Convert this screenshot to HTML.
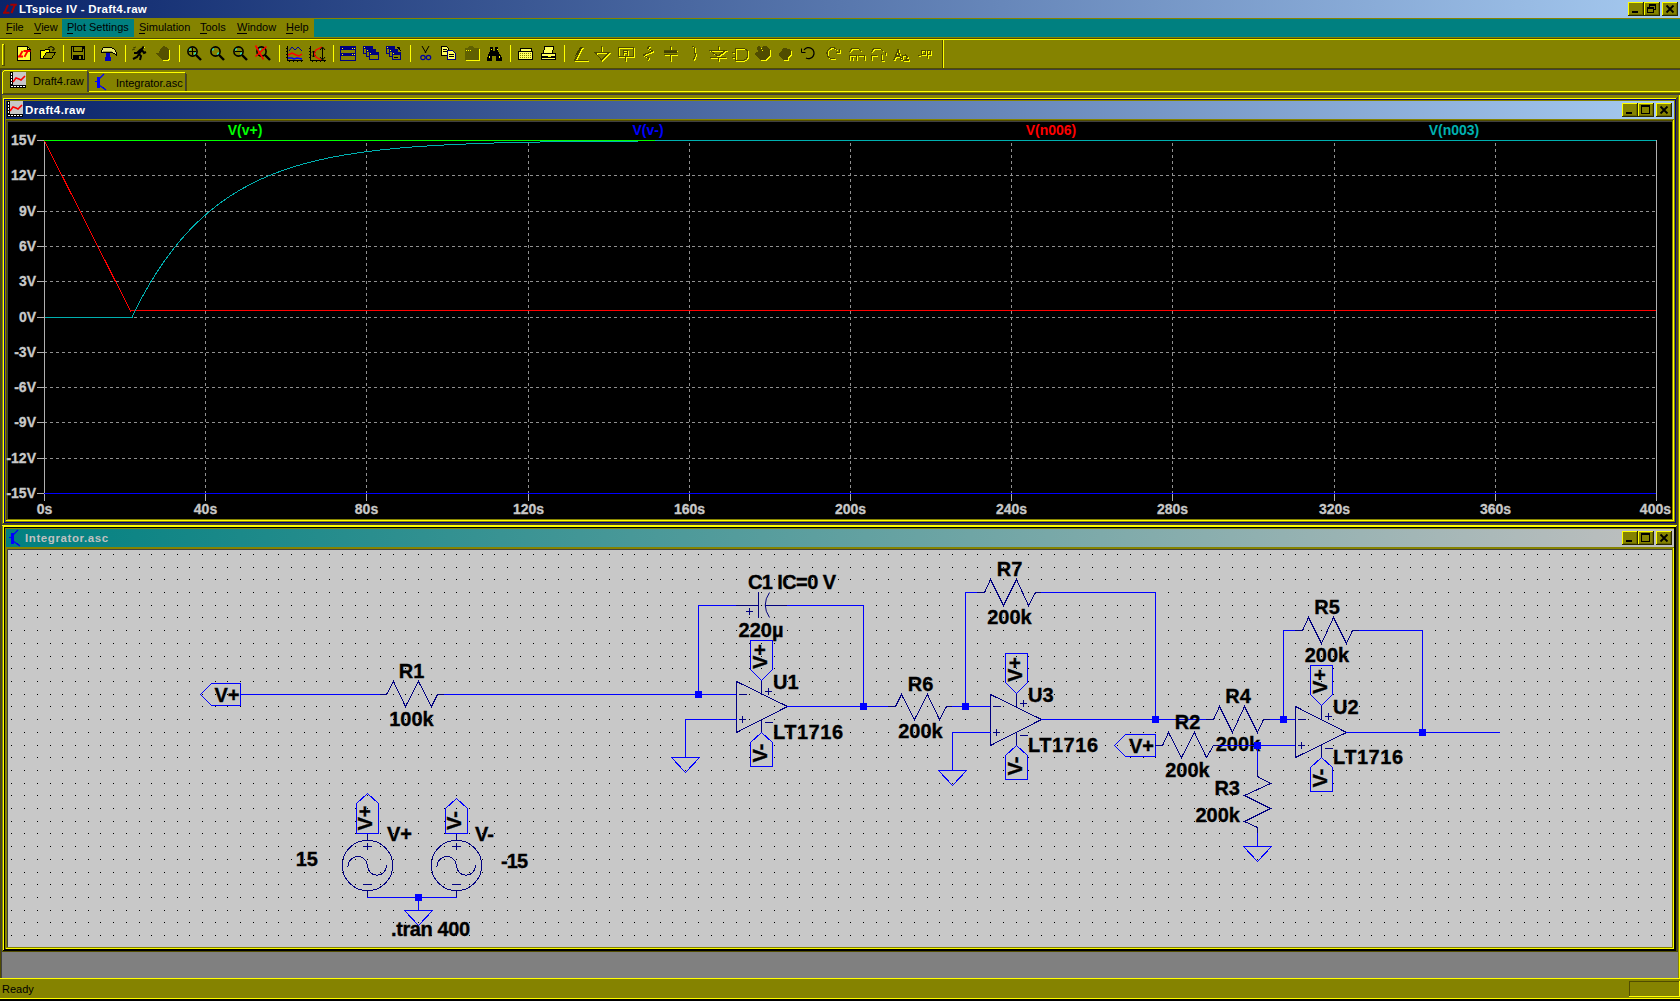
<!DOCTYPE html>
<html><head><meta charset="utf-8"><title>LTspice IV - Draft4.raw</title>
<style>html,body{margin:0;padding:0;width:1680px;height:1001px;overflow:hidden;background:#858300}svg{display:block}text{font-family:"Liberation Sans",sans-serif}</style>
</head><body><svg width="1680" height="1001" viewBox="0 0 1680 1001" shape-rendering="crispEdges" font-family="Liberation Sans, sans-serif"><defs>
<linearGradient id="gAct" x1="0" y1="0" x2="1" y2="0"><stop offset="0" stop-color="#0a246a"/><stop offset="1" stop-color="#a6caf0"/></linearGradient>
<linearGradient id="gInact" x1="0" y1="0" x2="1" y2="0"><stop offset="0" stop-color="#008080"/><stop offset="1" stop-color="#c0c0c0"/></linearGradient>
</defs><rect x="0" y="0" width="1680" height="1001" fill="#858300"/><rect x="0" y="0" width="1680" height="18" fill="url(#gAct)"/><text x="19" y="13" font-size="11.5" fill="#fff" font-weight="bold" text-anchor="start" letter-spacing="0.25">LTspice IV - Draft4.raw</text><path d="M8 4.8 L4.5 12.8 M3 12.8 H9.5 M10.3 4.8 H16.8 M14.8 5 L11.5 13.2" fill="none" stroke="#a00000" stroke-width="2" shape-rendering="geometricPrecision"/><rect x="1628" y="2" width="16" height="14" fill="#858300"/><rect x="1628" y="2" width="16" height="1" fill="#ffff00"/><rect x="1628" y="2" width="1" height="14" fill="#ffff00"/><rect x="1628" y="15" width="16" height="1" fill="#2a2800"/><rect x="1643" y="2" width="1" height="14" fill="#2a2800"/><rect x="1629" y="14" width="14" height="1" fill="#6a6800"/><rect x="1642" y="3" width="1" height="12" fill="#6a6800"/><rect x="1632" y="11" width="6" height="2" fill="#000000"/><rect x="1644" y="2" width="16" height="14" fill="#858300"/><rect x="1644" y="2" width="16" height="1" fill="#ffff00"/><rect x="1644" y="2" width="1" height="14" fill="#ffff00"/><rect x="1644" y="15" width="16" height="1" fill="#2a2800"/><rect x="1659" y="2" width="1" height="14" fill="#2a2800"/><rect x="1645" y="14" width="14" height="1" fill="#6a6800"/><rect x="1658" y="3" width="1" height="12" fill="#6a6800"/><path d="M1649.5 4.5h6v5h-6z M1647.5 7.5h6v5h-6z" fill="none" stroke="#000"/><rect x="1649" y="5" width="7" height="1" fill="#000000"/><rect x="1647" y="8" width="7" height="1" fill="#000000"/><rect x="1648" y="9" width="5" height="3" fill="#858300"/><rect x="1662" y="2" width="16" height="14" fill="#858300"/><rect x="1662" y="2" width="16" height="1" fill="#ffff00"/><rect x="1662" y="2" width="1" height="14" fill="#ffff00"/><rect x="1662" y="15" width="16" height="1" fill="#2a2800"/><rect x="1677" y="2" width="1" height="14" fill="#2a2800"/><rect x="1663" y="14" width="14" height="1" fill="#6a6800"/><rect x="1676" y="3" width="1" height="12" fill="#6a6800"/><path d="M1666.5 5.5l7 7M1673.5 5.5l-7 7" stroke="#000" stroke-width="1.8" fill="none" shape-rendering="geometricPrecision"/><rect x="0" y="18" width="1680" height="20" fill="#858300"/><rect x="314" y="19" width="1366" height="18" fill="#008080"/><rect x="62" y="19" width="72" height="18" fill="#008080"/><text x="6" y="31" font-size="11" fill="#000" font-weight="normal" text-anchor="start">File</text><rect x="6" y="33" width="6" height="1" fill="#000"/><text x="34" y="31" font-size="11" fill="#000" font-weight="normal" text-anchor="start">View</text><rect x="34" y="33" width="7" height="1" fill="#000"/><text x="67" y="31" font-size="11" fill="#000" font-weight="normal" text-anchor="start">Plot Settings</text><rect x="67" y="33" width="6" height="1" fill="#000"/><text x="139" y="31" font-size="11" fill="#000" font-weight="normal" text-anchor="start">Simulation</text><rect x="139" y="33" width="6" height="1" fill="#000"/><text x="200" y="31" font-size="11" fill="#000" font-weight="normal" text-anchor="start">Tools</text><rect x="200" y="33" width="7" height="1" fill="#000"/><text x="237" y="31" font-size="11" fill="#000" font-weight="normal" text-anchor="start">Window</text><rect x="237" y="33" width="10" height="1" fill="#000"/><text x="286" y="31" font-size="11" fill="#000" font-weight="normal" text-anchor="start">Help</text><rect x="286" y="33" width="7" height="1" fill="#000"/><rect x="0" y="38" width="1680" height="1" fill="#504c00"/><rect x="0" y="39" width="1680" height="1" fill="#ffff00"/><rect x="0" y="40" width="1680" height="28" fill="#858300"/><rect x="0" y="68" width="1680" height="1" fill="#504c00"/><rect x="0" y="69" width="1680" height="1" fill="#404040"/><rect x="2" y="44" width="1" height="21" fill="#ffff00"/><rect x="2" y="44" width="2" height="1" fill="#ffff00"/><rect x="4" y="44" width="1" height="22" fill="#504c00"/><rect x="2" y="65" width="3" height="1" fill="#504c00"/><rect x="63" y="45" width="1" height="17" fill="#ffff00"/><rect x="94" y="45" width="1" height="17" fill="#ffff00"/><rect x="125" y="45" width="1" height="17" fill="#ffff00"/><rect x="179" y="45" width="1" height="17" fill="#ffff00"/><rect x="279" y="45" width="1" height="17" fill="#ffff00"/><rect x="333" y="45" width="1" height="17" fill="#ffff00"/><rect x="410" y="45" width="1" height="17" fill="#ffff00"/><rect x="510" y="45" width="1" height="17" fill="#ffff00"/><rect x="564" y="45" width="1" height="17" fill="#ffff00"/><rect x="942" y="40" width="1" height="28" fill="#504c00"/><rect x="943" y="40" width="1" height="28" fill="#ffff00"/><path d="M17.5 46.5H27.5L30.5 49.5V60.5H17.5Z" fill="#ffff40" stroke="#000"/><path d="M27.5 46.5V49.5H30.5" fill="none" stroke="#000"/><path d="M22.5 51 L19.5 56.5 M18 56.5 H23 M23.5 51 H30.5 M27.5 51.2 L24.5 56.8" fill="none" stroke="#ff0000" stroke-width="1.8" shape-rendering="geometricPrecision"/><path d="M40.5 50.5H44.5L45.5 49.5H49.5V52.5H55.5L51.5 58.5H40.5Z" fill="#ffff00" stroke="#000"/><path d="M42.5 58.5L46.5 52.5H55.5L51.5 58.5Z" fill="#858300" stroke="#000"/><path d="M48 48 Q51 45 54 48 M54 48V50 M52 50H54" fill="none" stroke="#000" shape-rendering="geometricPrecision"/><path d="M71.5 46.5H84.5V59.5H72.5L71.5 58.5Z" fill="#858300" stroke="#000"/><path d="M73.5 46.5V51.5H82.5V46.5" fill="none" stroke="#000"/><rect x="73" y="55" width="10" height="5" fill="#000"/><rect x="79" y="56" width="2" height="3" fill="#858300"/><rect x="83" y="47" width="1" height="2" fill="#000"/><path d="M101.5 50.5 L103.5 47.5 H111.5 L114.5 49.5 L116.5 52.5 V55.5 L114.5 53.5 L111.5 52.5 H103.5 L101.5 52.5Z" fill="#e8e870" stroke="#000"/><rect x="103" y="51" width="9" height="1" fill="#a0a040"/><rect x="106" y="53" width="4" height="6" fill="#0000c0"/><rect x="105" y="57" width="6" height="4" fill="#0000c0"/><path d="M133 59 L137 57 L139 54 L141 56 L140 60 M134 53 L137 53 L140 50 L143 48 M139 54 L142 50 L144 53 L146 52 M142 48 L144 47" fill="none" stroke="#000" stroke-width="2" shape-rendering="geometricPrecision"/><rect x="144" y="47" width="1" height="1" fill="#ffff00"/><path d="M132 50 L135 49 M133 48 L136 47" stroke="#404000" fill="none" shape-rendering="geometricPrecision"/><path d="M160 49 L163 46 L166 47 L169 50 V58 L168 60 H162 L157 55 L156 53 L159 53Z" fill="#ffff00" transform="translate(1 1)"/><path d="M160 49 L163 46 L166 47 L169 50 V58 L168 60 H162 L157 55 L156 53 L159 53Z" fill="#555000"/><circle cx="192.5" cy="51.5" r="4.6" fill="none" stroke="#000" stroke-width="1.6" shape-rendering="geometricPrecision"/><path d="M196.0 55.0 L201.0 60.0" stroke="#000" stroke-width="2.4" shape-rendering="geometricPrecision"/><path d="M189.5 50.5 L190.5 48.5 M195.5 52.5 L194.5 54.5" stroke="#00ffff" stroke-width="1.2" shape-rendering="geometricPrecision"/><rect x="189" y="51" width="7" height="1" fill="#000"/><rect x="192" y="48" width="1" height="7" fill="#000"/><circle cx="215.5" cy="51.5" r="4.6" fill="none" stroke="#000" stroke-width="1.6" shape-rendering="geometricPrecision"/><path d="M219.0 55.0 L224.0 60.0" stroke="#000" stroke-width="2.4" shape-rendering="geometricPrecision"/><path d="M212.5 50.5 L213.5 48.5 M218.5 52.5 L217.5 54.5" stroke="#00ffff" stroke-width="1.2" shape-rendering="geometricPrecision"/><circle cx="238.5" cy="51.5" r="4.6" fill="none" stroke="#000" stroke-width="1.6" shape-rendering="geometricPrecision"/><path d="M242.0 55.0 L247.0 60.0" stroke="#000" stroke-width="2.4" shape-rendering="geometricPrecision"/><path d="M235.5 50.5 L236.5 48.5 M241.5 52.5 L240.5 54.5" stroke="#00ffff" stroke-width="1.2" shape-rendering="geometricPrecision"/><rect x="235" y="51" width="7" height="1" fill="#000"/><circle cx="261.5" cy="51.5" r="4.6" fill="none" stroke="#000" stroke-width="1.6" shape-rendering="geometricPrecision"/><path d="M265.0 55.0 L270.0 60.0" stroke="#000" stroke-width="2.4" shape-rendering="geometricPrecision"/><path d="M259.5 50.5 L260.5 48.5" stroke="#00ffff" stroke-width="1.2" shape-rendering="geometricPrecision"/><path d="M255.5 45.5 L263.5 59.5 M266.5 46.5 L255.5 56.5" stroke="#ff0000" stroke-width="1.6" shape-rendering="geometricPrecision"/><path d="M287.5 46 V60.5 H303" fill="none" stroke="#000" stroke-width="1"/><rect x="286" y="48" width="1" height="1" fill="#000"/><rect x="289" y="61" width="1" height="1" fill="#000"/><rect x="286" y="51" width="1" height="1" fill="#000"/><rect x="293" y="61" width="1" height="1" fill="#000"/><rect x="286" y="54" width="1" height="1" fill="#000"/><rect x="297" y="61" width="1" height="1" fill="#000"/><rect x="286" y="57" width="1" height="1" fill="#000"/><rect x="301" y="61" width="1" height="1" fill="#000"/><path d="M289 51 L292 47 L295 50 L298 47 L302 51" fill="none" stroke="#0000a0" shape-rendering="geometricPrecision"/><path d="M288 55 L292 53 L296 55 L299 56 L302 54" fill="none" stroke="#ff0000" stroke-width="1.5" shape-rendering="geometricPrecision"/><path d="M288 58 L292 58 L294 59 L297 58 L302 59" fill="none" stroke="#0000ff" stroke-width="1.5" shape-rendering="geometricPrecision"/><path d="M310.5 46 V60.5 H326" fill="none" stroke="#000" stroke-width="1"/><rect x="309" y="48" width="1" height="1" fill="#000"/><rect x="312" y="61" width="1" height="1" fill="#000"/><rect x="309" y="51" width="1" height="1" fill="#000"/><rect x="316" y="61" width="1" height="1" fill="#000"/><rect x="309" y="54" width="1" height="1" fill="#000"/><rect x="320" y="61" width="1" height="1" fill="#000"/><rect x="309" y="57" width="1" height="1" fill="#000"/><rect x="324" y="61" width="1" height="1" fill="#000"/><path d="M322 47 L316 50 L314 53 L316 57 L321 60" fill="none" stroke="#ff0000" stroke-width="1.3" shape-rendering="geometricPrecision"/><path d="M322.5 48V59 M320 50L322.5 47L325 50 M320 57L322.5 60L325 57 M313.5 51V57 M312 52.5L313.5 51L315 52.5 M312 55.5L313.5 57L315 55.5" fill="none" stroke="#000" shape-rendering="geometricPrecision"/><rect x="340.5" y="46.5" width="15" height="14" fill="#858300" stroke="#000080"/><rect x="341" y="47" width="14" height="3" fill="#000080"/><rect x="341" y="53" width="14" height="3" fill="#000080"/><rect x="342" y="48" width="1" height="1" fill="#ffff00"/><rect x="352" y="48" width="1" height="1" fill="#ffff00"/><rect x="354" y="48" width="1" height="1" fill="#ffff00"/><rect x="342" y="54" width="1" height="1" fill="#ffff00"/><rect x="352" y="54" width="1" height="1" fill="#ffff00"/><rect x="354" y="54" width="1" height="1" fill="#ffff00"/><rect x="363.5" y="46.5" width="9" height="7" fill="#858300" stroke="#000080"/><rect x="364" y="47" width="8" height="2" fill="#000080"/><rect x="364" y="47" width="1" height="1" fill="#ffff00"/><rect x="366.5" y="49.5" width="9" height="7" fill="#858300" stroke="#000080"/><rect x="367" y="50" width="8" height="2" fill="#000080"/><rect x="367" y="50" width="1" height="1" fill="#ffff00"/><rect x="369.5" y="52.5" width="9" height="7" fill="#858300" stroke="#000080"/><rect x="370" y="53" width="8" height="2" fill="#000080"/><rect x="370" y="53" width="1" height="1" fill="#ffff00"/><rect x="386.5" y="46.5" width="8" height="7" fill="#858300" stroke="#000080"/><rect x="387" y="47" width="7" height="2" fill="#000080"/><rect x="387" y="47" width="1" height="1" fill="#ffff00"/><rect x="389.5" y="49.5" width="8" height="7" fill="#858300" stroke="#000080"/><rect x="390" y="50" width="7" height="2" fill="#000080"/><rect x="390" y="50" width="1" height="1" fill="#ffff00"/><rect x="392.5" y="52.5" width="8" height="7" fill="#858300" stroke="#000080"/><rect x="393" y="53" width="7" height="2" fill="#000080"/><rect x="393" y="53" width="1" height="1" fill="#ffff00"/><rect x="394" y="57" width="4" height="1" fill="#000"/><path d="M397 47.5 H399.5 V50 M397.5 47.5 L401 51" fill="none" stroke="#000" shape-rendering="geometricPrecision"/><path d="M422 46 L426 53 M429 46 L425 53" stroke="#000" fill="none" shape-rendering="geometricPrecision"/><circle cx="423" cy="57.5" r="2.2" fill="none" stroke="#0000a0" stroke-width="1.2" shape-rendering="geometricPrecision"/><circle cx="428.5" cy="57.5" r="2.2" fill="none" stroke="#0000a0" stroke-width="1.2" shape-rendering="geometricPrecision"/><path d="M441.5 46.5H446.5L448.5 48.5V55.5H441.5Z" fill="#ffff60" stroke="#000"/><path d="M447.5 50.5H452.5L455.5 53.5V59.5H447.5Z" fill="#ffff60" stroke="#000080"/><rect x="443" y="49" width="4" height="1" fill="#000"/><rect x="443" y="51" width="4" height="1" fill="#000"/><rect x="449" y="54" width="5" height="1" fill="#000"/><rect x="449" y="56" width="5" height="1" fill="#000"/><path d="M465 48H468L469 46H473L474 48H479V60H465Z" fill="#ffff00" transform="translate(1 1)"/><path d="M465 48H468L469 46H473L474 48H479V60H465Z" fill="#606000"/><path d="M466 50H472" stroke="#ffff00" stroke-dasharray="1 1"/><path d="M490 47H493V51H495V47H498V51L502 58V61H496V56H492V61H487V58L490 51Z" fill="#000"/><rect x="489" y="56" width="1" height="2" fill="#ffff00"/><rect x="499" y="56" width="1" height="2" fill="#ffff00"/><rect x="491" y="49" width="1" height="1" fill="#ffff00"/><rect x="497" y="49" width="1" height="1" fill="#ffff00"/><path d="M518.5 51.5H532.5V59.5H518.5Z" fill="#ffff60" stroke="#000"/><path d="M520.5 48.5H531.5V51.5H520.5Z" fill="#ffff60" stroke="#000"/><path d="M520 53.5H531 M520 55.5H531 M520 57.5H531" stroke="#858300" stroke-dasharray="1 1"/><path d="M541.5 53.5H555.5V59.5H541.5Z" fill="#ffff60" stroke="#000"/><path d="M544.5 46.5H553.5L552.5 53.5H543.5Z" fill="#ffff60" stroke="#000"/><rect x="542" y="56" width="13" height="2" fill="#000"/><rect x="548" y="56" width="3" height="1" fill="#ffff00"/><path d="M582 47 L575 60 M574 60.5 H588" fill="none" stroke="#ffff00" stroke-width="1.5" transform="translate(1 1)"/><path d="M582 47 L575 60 M574 60.5 H588" fill="none" stroke="#504c00" stroke-width="1.5"/><path d="M576 56 L582 47 L580 47 L575 56Z" fill="#404000"/><path d="M601.5 46 V52 M595 52.5 H609 L601.5 60 Z" fill="none" stroke="#ffff00" stroke-width="1" transform="translate(1 1)"/><path d="M601.5 46 V52 M595 52.5 H609 L601.5 60 Z" fill="none" stroke="#504c00" stroke-width="1"/><path d="M618.5 47.5 H633.5 V56.5 H618.5Z M625.5 57 V61 M623.5 55 V50.5 H627.5 V55 M623.5 52.5 H627.5" fill="none" stroke="#ffff00" stroke-width="1" transform="translate(1 1)"/><path d="M618.5 47.5 H633.5 V56.5 H618.5Z M625.5 57 V61 M623.5 55 V50.5 H627.5 V55 M623.5 52.5 H627.5" fill="none" stroke="#504c00" stroke-width="1"/><path d="M650 46 L647 48 L653 51 L643 55 L649 58 L647 60" fill="none" stroke="#ffff00" stroke-width="1" transform="translate(1 1)"/><path d="M650 46 L647 48 L653 51 L643 55 L649 58 L647 60" fill="none" stroke="#504c00" stroke-width="1"/><path d="M670.5 46 V50 M664 50.5 H677 M664 54.5 H677 M670.5 55 V61" fill="none" stroke="#ffff00" stroke-width="1" transform="translate(1 1)"/><path d="M670.5 46 V50 M664 50.5 H677 M664 54.5 H677 M670.5 55 V61" fill="none" stroke="#504c00" stroke-width="1"/><rect x="664" y="51" width="13" height="2" fill="#404000"/><path d="M692 46 Q697 48 694 52 Q697 55 693 60" fill="none" stroke="#ffff00" stroke-width="1" transform="translate(1 1)"/><path d="M692 46 Q697 48 694 52 Q697 55 693 60" fill="none" stroke="#504c00" stroke-width="1"/><path d="M718.5 46 V50 M710 50.5 H726 L718 56 Z M710 57.5 H726 M718.5 57 V61 M718 56 L724 51" fill="none" stroke="#ffff00" stroke-width="1" transform="translate(1 1)"/><path d="M718.5 46 V50 M710 50.5 H726 L718 56 Z M710 57.5 H726 M718.5 57 V61 M718 56 L724 51" fill="none" stroke="#504c00" stroke-width="1"/><path d="M732 52.5 H735 M732 57.5 H735 M735.5 48.5 H741 Q749 48.5 748 55 Q747 60.5 741 60.5 H735.5Z" fill="none" stroke="#ffff00" stroke-width="1" transform="translate(1 1)"/><path d="M732 52.5 H735 M732 57.5 H735 M735.5 48.5 H741 Q749 48.5 748 55 Q747 60.5 741 60.5 H735.5Z" fill="none" stroke="#504c00" stroke-width="1"/><path d="M755 53 L757 52 L758 52 L757 48 L758 46 L760 46 L761 48 L764 46 L766 46 L770 50 L770 52 L770 55 L766 59 L766 60 L761 60 L755 55Z" fill="#ffff00" transform="translate(1 1)"/><path d="M755 53 L757 52 L758 52 L757 48 L758 46 L760 46 L761 48 L764 46 L766 46 L770 50 L770 52 L770 55 L766 59 L766 60 L761 60 L755 55Z" fill="#504c00"/><rect x="761" y="48" width="1" height="1" fill="#ffff00"/><rect x="762" y="50" width="1" height="1" fill="#ffff00"/><rect x="770" y="50" width="1" height="1" fill="#ffff00"/><path d="M779 53 L781 51 L782 51 L782 49 L784 48 L786 48 L787 49 L789 49 L790 50 L791 51 L791 54 L788 58 L788 60 L783 60 L779 55Z" fill="#ffff00" transform="translate(1 1)"/><path d="M779 53 L781 51 L782 51 L782 49 L784 48 L786 48 L787 49 L789 49 L790 50 L791 51 L791 54 L788 58 L788 60 L783 60 L779 55Z" fill="#504c00"/><path d="M804 50 A5.5 5.5 0 1 1 806 58" fill="none" stroke="#000" stroke-width="1.3" shape-rendering="geometricPrecision"/><path d="M801.5 48.5 V52.5 H805.5" fill="none" stroke="#000" shape-rendering="geometricPrecision"/><path d="M837 50 A5.5 5.5 0 1 0 835 58 M839.5 48.5 V52.5 H835.5" fill="none" stroke="#ffff00" stroke-width="1.2" transform="translate(1 1)"/><path d="M837 50 A5.5 5.5 0 1 0 835 58 M839.5 48.5 V52.5 H835.5" fill="none" stroke="#504c00" stroke-width="1.2"/><path d="M849 60 V55 H856 V60 M849.5 52 L852 48 H858 L861 51 M852.5 57 V60 M858 55 H864 V60" fill="none" stroke="#ffff00" stroke-width="1" transform="translate(1 1)"/><path d="M849 60 V55 H856 V60 M849.5 52 L852 48 H858 L861 51 M852.5 57 V60 M858 55 H864 V60" fill="none" stroke="#504c00" stroke-width="1"/><path d="M871.5 60 V55 H877 M871.5 52 L874 48 H880 L883 51 M881.5 54 V60 H884 M885.5 52 V55" fill="none" stroke="#ffff00" stroke-width="1" transform="translate(1 1)"/><path d="M871.5 60 V55 H877 M871.5 52 L874 48 H880 L883 51 M881.5 54 V60 H884 M885.5 52 V55" fill="none" stroke="#504c00" stroke-width="1"/><path d="M894 60 L898 50 L901 60 M896 56 H900 M903 60 Q900 55 906 55 Q909 57 905 60 H909" fill="none" stroke="#ffff00" stroke-width="1.3" transform="translate(1 1)"/><path d="M894 60 L898 50 L901 60 M896 56 H900 M903 60 Q900 55 906 55 Q909 57 905 60 H909" fill="none" stroke="#504c00" stroke-width="1.3"/><path d="M918 55.5 H920 M921.5 50.5 H925.5 V54.5 H921.5Z M927.5 50 V58 M927.5 50.5 H930.5 V54.5 H927.5" fill="none" stroke="#ffff00" stroke-width="1" transform="translate(1 1)"/><path d="M918 55.5 H920 M921.5 50.5 H925.5 V54.5 H921.5Z M927.5 50 V58 M927.5 50.5 H930.5 V54.5 H927.5" fill="none" stroke="#504c00" stroke-width="1"/><rect x="2" y="70" width="86" height="24" fill="#858300"/><rect x="4" y="70" width="83" height="1" fill="#ffff00"/><rect x="2" y="72" width="1" height="22" fill="#ffff00"/><path d="M2.5 72.5 L4.5 70.5" stroke="#ffff00"/><rect x="3" y="71" width="1" height="1" fill="#ffff00"/><rect x="87" y="71" width="1" height="21" fill="#404040"/><rect x="88" y="72" width="1" height="20" fill="#504c00"/><rect x="89" y="72" width="96" height="1" fill="#ffff00"/><rect x="88" y="73" width="1" height="18" fill="#404040"/><rect x="185" y="73" width="1" height="18" fill="#404040"/><rect x="186" y="74" width="1" height="17" fill="#504c00"/><rect x="89" y="91" width="1591" height="1" fill="#ffff00"/><rect x="0" y="93" width="1680" height="1" fill="#504c00"/><rect x="0" y="94" width="1680" height="1" fill="#404040"/><rect x="3" y="92" width="85" height="1" fill="#858300"/><rect x="2" y="72" width="1" height="22" fill="#ffff00"/><text x="33" y="85" font-size="11" fill="#000" font-weight="normal" text-anchor="start">Draft4.raw</text><text x="116" y="87" font-size="11" fill="#000" font-weight="normal" text-anchor="start">Integrator.asc</text><rect x="13" y="72" width="13" height="13" fill="#c8c8c8"/><rect x="10" y="72" width="3" height="16" fill="#000"/><rect x="10" y="85" width="16" height="3" fill="#000"/><rect x="11" y="73" width="1" height="2" fill="#fff"/><rect x="11" y="76" width="1" height="2" fill="#fff"/><rect x="11" y="79" width="1" height="2" fill="#fff"/><rect x="11" y="82" width="1" height="2" fill="#fff"/><rect x="11" y="86" width="2" height="1" fill="#fff"/><rect x="14" y="86" width="2" height="1" fill="#fff"/><rect x="17" y="86" width="2" height="1" fill="#fff"/><rect x="20" y="86" width="2" height="1" fill="#fff"/><rect x="23" y="86" width="2" height="1" fill="#fff"/><rect x="12" y="72" width="1" height="13" fill="#000"/><path d="M13 82 L16 78 L19 79 L21 80 L25 76" fill="none" stroke="#ff0000" stroke-width="1.6" shape-rendering="geometricPrecision"/><rect x="97" y="77" width="3" height="11" fill="#0000ff"/><rect x="95" y="81" width="3" height="1" fill="#0000ff"/><path d="M99 79 L104 74" stroke="#0000ff" stroke-width="1.3" fill="none" shape-rendering="geometricPrecision"/><path d="M99 85 L106 90" stroke="#0000ff" stroke-width="1.3" fill="none" shape-rendering="geometricPrecision"/><path d="M102 88 L105 89 L104 86Z" fill="#0000ff"/><rect x="0" y="95" width="1680" height="906" fill="#858300"/><rect x="0" y="69" width="1" height="909" fill="#504c00"/><rect x="1" y="69" width="1" height="909" fill="#404040"/><rect x="2" y="952" width="1676" height="26" fill="#808080"/><rect x="1678" y="95" width="1" height="883" fill="#858300"/><rect x="1679" y="95" width="1" height="883" fill="#ffff00"/><rect x="2" y="97" width="1676" height="428" fill="#858300"/><rect x="3" y="98" width="1674" height="1" fill="#ffff00"/><rect x="4" y="99" width="1672" height="1" fill="#000080"/><rect x="3" y="98" width="1" height="425" fill="#ffff00"/><rect x="4" y="99" width="1" height="424" fill="#000080"/><rect x="2" y="524" width="1676" height="1" fill="#404040"/><rect x="3" y="523" width="1674" height="1" fill="#504c00"/><rect x="4" y="522" width="1672" height="1" fill="#000080"/><rect x="1677" y="97" width="1" height="428" fill="#404040"/><rect x="1676" y="98" width="1" height="426" fill="#504c00"/><rect x="1675" y="99" width="1" height="424" fill="#000080"/><rect x="6" y="101" width="1668" height="18" fill="url(#gAct)"/><rect x="1622" y="103" width="16" height="14" fill="#858300"/><rect x="1622" y="103" width="16" height="1" fill="#ffff00"/><rect x="1622" y="103" width="1" height="14" fill="#ffff00"/><rect x="1622" y="116" width="16" height="1" fill="#2a2800"/><rect x="1637" y="103" width="1" height="14" fill="#2a2800"/><rect x="1623" y="115" width="14" height="1" fill="#6a6800"/><rect x="1636" y="104" width="1" height="12" fill="#6a6800"/><rect x="1626" y="112" width="6" height="2" fill="#000000"/><rect x="1638" y="103" width="16" height="14" fill="#858300"/><rect x="1638" y="103" width="16" height="1" fill="#ffff00"/><rect x="1638" y="103" width="1" height="14" fill="#ffff00"/><rect x="1638" y="116" width="16" height="1" fill="#2a2800"/><rect x="1653" y="103" width="1" height="14" fill="#2a2800"/><rect x="1639" y="115" width="14" height="1" fill="#6a6800"/><rect x="1652" y="104" width="1" height="12" fill="#6a6800"/><path d="M1641.5 105.5h8v8h-8z" fill="none" stroke="#000"/><rect x="1641" y="106" width="9" height="1" fill="#000000"/><rect x="1656" y="103" width="16" height="14" fill="#858300"/><rect x="1656" y="103" width="16" height="1" fill="#ffff00"/><rect x="1656" y="103" width="1" height="14" fill="#ffff00"/><rect x="1656" y="116" width="16" height="1" fill="#2a2800"/><rect x="1671" y="103" width="1" height="14" fill="#2a2800"/><rect x="1657" y="115" width="14" height="1" fill="#6a6800"/><rect x="1670" y="104" width="1" height="12" fill="#6a6800"/><path d="M1660.5 106.5l7 7M1667.5 106.5l-7 7" stroke="#000" stroke-width="1.8" fill="none" shape-rendering="geometricPrecision"/><text x="25" y="114" font-size="11.5" fill="#fff" font-weight="bold" text-anchor="start" letter-spacing="0.4">Draft4.raw</text><rect x="10" y="101" width="13" height="13" fill="#c8c8c8"/><rect x="7" y="101" width="3" height="16" fill="#000"/><rect x="7" y="114" width="16" height="3" fill="#000"/><rect x="8" y="102" width="1" height="2" fill="#fff"/><rect x="8" y="105" width="1" height="2" fill="#fff"/><rect x="8" y="108" width="1" height="2" fill="#fff"/><rect x="8" y="111" width="1" height="2" fill="#fff"/><rect x="8" y="115" width="2" height="1" fill="#fff"/><rect x="11" y="115" width="2" height="1" fill="#fff"/><rect x="14" y="115" width="2" height="1" fill="#fff"/><rect x="17" y="115" width="2" height="1" fill="#fff"/><rect x="20" y="115" width="2" height="1" fill="#fff"/><rect x="9" y="101" width="1" height="13" fill="#000"/><path d="M10 111 L13 107 L16 108 L18 109 L22 105" fill="none" stroke="#ff0000" stroke-width="1.6" shape-rendering="geometricPrecision"/><rect x="6" y="120" width="1668" height="1" fill="#504c00"/><rect x="6" y="120" width="1" height="401" fill="#504c00"/><rect x="7" y="121" width="1666" height="1" fill="#404040"/><rect x="7" y="121" width="1" height="399" fill="#404040"/><rect x="6" y="520" width="1668" height="1" fill="#ffff00"/><rect x="1673" y="120" width="1" height="401" fill="#ffff00"/><rect x="7" y="519" width="1666" height="1" fill="#858300"/><rect x="1672" y="121" width="1" height="399" fill="#858300"/><rect x="8" y="122" width="1664" height="397" fill="#000000"/><g><path d="M205.5 143V493 M366.5 143V493 M528.5 143V493 M689.5 143V493 M850.5 143V493 M1011.5 143V493 M1172.5 143V493 M1334.5 143V493 M1495.5 143V493 M44 175.5H1656 M44 211.5H1656 M44 246.5H1656 M44 281.5H1656 M44 317.5H1656 M44 352.5H1656 M44 387.5H1656 M44 422.5H1656 M44 458.5H1656" stroke="#909090" stroke-dasharray="3 3" fill="none"/><path d="M44.5 140V500.5 M1656.5 140V500.5" stroke="#b0b0b0" fill="none"/><path d="M37 140.5H44 M37 175.5H44 M37 211.5H44 M37 246.5H44 M37 281.5H44 M37 317.5H44 M37 352.5H44 M37 387.5H44 M37 422.5H44 M37 458.5H44 M37 493.5H44 M205.5 493V500.5 M366.5 493V500.5 M528.5 493V500.5 M689.5 493V500.5 M850.5 493V500.5 M1011.5 493V500.5 M1172.5 493V500.5 M1334.5 493V500.5 M1495.5 493V500.5" stroke="#b0b0b0" fill="none"/><text x="36" y="145" font-size="14" font-weight="bold" fill="#c8c8c8" stroke="#c8c8c8" stroke-width="0.3" text-anchor="end">15V</text><text x="36" y="180" font-size="14" font-weight="bold" fill="#c8c8c8" stroke="#c8c8c8" stroke-width="0.3" text-anchor="end">12V</text><text x="36" y="216" font-size="14" font-weight="bold" fill="#c8c8c8" stroke="#c8c8c8" stroke-width="0.3" text-anchor="end">9V</text><text x="36" y="251" font-size="14" font-weight="bold" fill="#c8c8c8" stroke="#c8c8c8" stroke-width="0.3" text-anchor="end">6V</text><text x="36" y="286" font-size="14" font-weight="bold" fill="#c8c8c8" stroke="#c8c8c8" stroke-width="0.3" text-anchor="end">3V</text><text x="36" y="322" font-size="14" font-weight="bold" fill="#c8c8c8" stroke="#c8c8c8" stroke-width="0.3" text-anchor="end">0V</text><text x="36" y="357" font-size="14" font-weight="bold" fill="#c8c8c8" stroke="#c8c8c8" stroke-width="0.3" text-anchor="end">-3V</text><text x="36" y="392" font-size="14" font-weight="bold" fill="#c8c8c8" stroke="#c8c8c8" stroke-width="0.3" text-anchor="end">-6V</text><text x="36" y="427" font-size="14" font-weight="bold" fill="#c8c8c8" stroke="#c8c8c8" stroke-width="0.3" text-anchor="end">-9V</text><text x="36" y="463" font-size="14" font-weight="bold" fill="#c8c8c8" stroke="#c8c8c8" stroke-width="0.3" text-anchor="end">-12V</text><text x="36" y="498" font-size="14" font-weight="bold" fill="#c8c8c8" stroke="#c8c8c8" stroke-width="0.3" text-anchor="end">-15V</text><text x="44.5" y="514" font-size="14" font-weight="bold" fill="#c8c8c8" stroke="#c8c8c8" stroke-width="0.3" text-anchor="middle">0s</text><text x="205.5" y="514" font-size="14" font-weight="bold" fill="#c8c8c8" stroke="#c8c8c8" stroke-width="0.3" text-anchor="middle">40s</text><text x="366.5" y="514" font-size="14" font-weight="bold" fill="#c8c8c8" stroke="#c8c8c8" stroke-width="0.3" text-anchor="middle">80s</text><text x="528.5" y="514" font-size="14" font-weight="bold" fill="#c8c8c8" stroke="#c8c8c8" stroke-width="0.3" text-anchor="middle">120s</text><text x="689.5" y="514" font-size="14" font-weight="bold" fill="#c8c8c8" stroke="#c8c8c8" stroke-width="0.3" text-anchor="middle">160s</text><text x="850.5" y="514" font-size="14" font-weight="bold" fill="#c8c8c8" stroke="#c8c8c8" stroke-width="0.3" text-anchor="middle">200s</text><text x="1011.5" y="514" font-size="14" font-weight="bold" fill="#c8c8c8" stroke="#c8c8c8" stroke-width="0.3" text-anchor="middle">240s</text><text x="1172.5" y="514" font-size="14" font-weight="bold" fill="#c8c8c8" stroke="#c8c8c8" stroke-width="0.3" text-anchor="middle">280s</text><text x="1334.5" y="514" font-size="14" font-weight="bold" fill="#c8c8c8" stroke="#c8c8c8" stroke-width="0.3" text-anchor="middle">320s</text><text x="1495.5" y="514" font-size="14" font-weight="bold" fill="#c8c8c8" stroke="#c8c8c8" stroke-width="0.3" text-anchor="middle">360s</text><text x="1671" y="514" font-size="14" font-weight="bold" fill="#c8c8c8" stroke="#c8c8c8" stroke-width="0.3" text-anchor="end">400s</text><path d="M44 493.5H1656" stroke="#0000ff" fill="none"/><path d="M44.5 141 L130.5 311 L131.5 310.5 H1656" stroke="#ff0000" fill="none" shape-rendering="crispEdges"/><path d="M44.5 317.5 L132.0 317.5 L134.0 312.9 L136.0 308.9 L138.0 305.0 L140.0 301.1 L142.0 297.4 L144.0 293.8 L146.0 290.2 L148.0 286.7 L150.0 283.3 L152.0 280.0 L154.0 276.8 L156.0 273.6 L158.0 270.5 L160.0 267.5 L162.0 264.5 L164.0 261.6 L166.0 258.8 L168.0 256.1 L170.0 253.4 L172.0 250.7 L174.0 248.2 L176.0 245.7 L178.0 243.2 L180.0 240.8 L182.0 238.5 L184.0 236.2 L186.0 234.0 L188.0 231.8 L190.0 229.7 L192.0 227.6 L194.0 225.6 L196.0 223.6 L198.0 221.7 L200.0 219.8 L202.0 218.0 L204.0 216.2 L206.0 214.4 L208.0 212.7 L210.0 211.0 L212.0 209.4 L214.0 207.8 L216.0 206.2 L218.0 204.7 L220.0 203.2 L222.0 201.7 L224.0 200.3 L226.0 198.9 L228.0 197.5 L230.0 196.2 L232.0 194.9 L234.0 193.7 L236.0 192.4 L238.0 191.2 L240.0 190.0 L242.0 188.9 L244.0 187.8 L246.0 186.7 L248.0 185.6 L250.0 184.5 L252.0 183.5 L254.0 182.5 L256.0 181.5 L258.0 180.6 L260.0 179.7 L262.0 178.7 L264.0 177.9 L266.0 177.0 L268.0 176.1 L270.0 175.3 L272.0 174.5 L274.0 173.7 L276.0 172.9 L278.0 172.2 L280.0 171.4 L282.0 170.7 L284.0 170.0 L286.0 169.3 L288.0 168.7 L290.0 168.0 L292.0 167.4 L294.0 166.7 L296.0 166.1 L298.0 165.5 L300.0 165.0 L302.0 164.4 L304.0 163.8 L306.0 163.3 L308.0 162.8 L310.0 162.2 L312.0 161.7 L314.0 161.2 L316.0 160.8 L318.0 160.3 L320.0 159.8 L322.0 159.4 L324.0 158.9 L326.0 158.5 L328.0 158.1 L330.0 157.7 L332.0 157.3 L334.0 156.9 L336.0 156.5 L338.0 156.1 L340.0 155.8 L342.0 155.4 L344.0 155.1 L346.0 154.7 L348.0 154.4 L350.0 154.1 L352.0 153.8 L354.0 153.5 L356.0 153.2 L358.0 152.9 L360.0 152.6 L362.0 152.3 L364.0 152.0 L366.0 151.8 L368.0 151.5 L370.0 151.2 L372.0 151.0 L374.0 150.7 L376.0 150.5 L378.0 150.3 L380.0 150.0 L382.0 149.8 L384.0 149.6 L386.0 149.4 L388.0 149.2 L390.0 149.0 L392.0 148.8 L394.0 148.6 L396.0 148.4 L398.0 148.2 L400.0 148.0 L402.0 147.9 L404.0 147.7 L406.0 147.5 L408.0 147.4 L410.0 147.2 L412.0 147.0 L414.0 146.9 L416.0 146.7 L418.0 146.6 L420.0 146.5 L422.0 146.3 L424.0 146.2 L426.0 146.1 L428.0 145.9 L430.0 145.8 L432.0 145.7 L434.0 145.6 L436.0 145.4 L438.0 145.3 L440.0 145.2 L442.0 145.1 L444.0 145.0 L446.0 144.9 L448.0 144.8 L450.0 144.7 L452.0 144.6 L454.0 144.5 L456.0 144.4 L458.0 144.3 L460.0 144.2 L462.0 144.1 L464.0 144.1 L466.0 144.0 L468.0 143.9 L470.0 143.8 L472.0 143.7 L474.0 143.7 L476.0 143.6 L478.0 143.5 L480.0 143.4 L482.0 143.4 L484.0 143.3 L486.0 143.2 L488.0 143.2 L490.0 143.1 L492.0 143.1 L494.0 143.0 L496.0 142.9 L498.0 142.9 L500.0 142.8 L502.0 142.8 L504.0 142.7 L506.0 142.7 L508.0 142.6 L510.0 142.6 L512.0 142.5 L514.0 142.5 L516.0 142.4 L518.0 142.4 L520.0 142.3 L522.0 142.3 L524.0 142.3 L526.0 142.2 L528.0 142.2 L530.0 142.1 L532.0 142.1 L534.0 142.1 L536.0 142.0 L538.0 142.0 L540.0 142.0 L542.0 141.9 L544.0 141.9 L546.0 141.9 L548.0 141.8 L550.0 141.8 L552.0 141.8 L554.0 141.7 L556.0 141.7 L558.0 141.7 L560.0 141.6 L562.0 141.6 L564.0 141.6 L566.0 141.6 L568.0 141.5 L570.0 141.5 L572.0 141.5 L574.0 141.5 L576.0 141.5 L578.0 141.4 L580.0 141.4 L582.0 141.4 L584.0 141.4 L586.0 141.3 L588.0 141.3 L590.0 141.3 L592.0 141.3 L594.0 141.3 L596.0 141.3 L598.0 141.2 L600.0 141.2 L602.0 141.2 L604.0 141.2 L606.0 141.2 L608.0 141.2 L610.0 141.1 L612.0 141.1 L614.0 141.1 L616.0 141.1 L618.0 141.1 L620.0 141.1 L622.0 141.1 L624.0 141.0 L626.0 141.0 L628.0 141.0 L630.0 141.0 L632.0 141.0 L634.0 141.0 L636.0 141.0 L638.0 141.0 L640.0 140.9 L642.0 140.9 L644.0 140.9 L646.0 140.9 L648.0 140.9 L650.0 140.9 L652.0 140.9 L654.0 140.9 L656.0 140.9 L658.0 140.9 L660.0 140.9 L662.0 140.8 L664.0 140.8 L666.0 140.8 L668.0 140.8 L670.0 140.8 L672.0 140.8 L674.0 140.8 L676.0 140.8 L678.0 140.8 L680.0 140.8 L682.0 140.8 L684.0 140.8 L686.0 140.8 L688.0 140.8 L690.0 140.7 L692.0 140.7 L694.0 140.7 L696.0 140.7 L698.0 140.7 L700.0 140.7 L702.0 140.7 L704.0 140.7 L706.0 140.7 L708.0 140.7 L710.0 140.7 L712.0 140.7 L714.0 140.7 L716.0 140.7 L718.0 140.7 L720.0 140.7 L722.0 140.7 L724.0 140.7 L726.0 140.7 L728.0 140.7 L730.0 140.7 L732.0 140.7 L734.0 140.6 L736.0 140.6 L738.0 140.6 L740.0 140.6 L742.0 140.6 L744.0 140.6 L746.0 140.6 L748.0 140.6 L750.0 140.6 L752.0 140.6 L754.0 140.6 L756.0 140.6 L758.0 140.6 L760.0 140.6 L762.0 140.6 L764.0 140.6 L766.0 140.6 L768.0 140.6 L770.0 140.6 L772.0 140.6 L774.0 140.6 L776.0 140.6 L778.0 140.6 L780.0 140.6 L782.0 140.6 L784.0 140.6 L786.0 140.6 L788.0 140.6 L790.0 140.6 L792.0 140.6 L794.0 140.6 L796.0 140.6 L798.0 140.6 L800.0 140.6 L802.0 140.6 L804.0 140.6 L806.0 140.6 L808.0 140.6 L810.0 140.6 L812.0 140.6 L814.0 140.6 L816.0 140.6 L818.0 140.6 L820.0 140.6 L822.0 140.6 L824.0 140.6 L826.0 140.6 L828.0 140.5 L830.0 140.5 L832.0 140.5 L834.0 140.5 L836.0 140.5 L838.0 140.5 L840.0 140.5 L842.0 140.5 L844.0 140.5 L846.0 140.5 L848.0 140.5 L850.0 140.5 L852.0 140.5 L854.0 140.5 L856.0 140.5 L858.0 140.5 L860.0 140.5 L862.0 140.5 L864.0 140.5 L866.0 140.5 L868.0 140.5 L870.0 140.5 L872.0 140.5 L874.0 140.5 L876.0 140.5 L878.0 140.5 L880.0 140.5 L882.0 140.5 L884.0 140.5 L886.0 140.5 L888.0 140.5 L890.0 140.5 L892.0 140.5 L894.0 140.5 L896.0 140.5 L898.0 140.5 L900.0 140.5 L902.0 140.5 L904.0 140.5 L906.0 140.5 L908.0 140.5 L910.0 140.5 L912.0 140.5 L914.0 140.5 L916.0 140.5 L918.0 140.5 L920.0 140.5 L922.0 140.5 L924.0 140.5 L926.0 140.5 L928.0 140.5 L930.0 140.5 L932.0 140.5 L934.0 140.5 L936.0 140.5 L938.0 140.5 L940.0 140.5 L942.0 140.5 L944.0 140.5 L946.0 140.5 L948.0 140.5 L950.0 140.5 L952.0 140.5 L954.0 140.5 L956.0 140.5 L958.0 140.5 L960.0 140.5 L962.0 140.5 L964.0 140.5 L966.0 140.5 L968.0 140.5 L970.0 140.5 L972.0 140.5 L974.0 140.5 L976.0 140.5 L978.0 140.5 L980.0 140.5 L982.0 140.5 L984.0 140.5 L986.0 140.5 L988.0 140.5 L990.0 140.5 L992.0 140.5 L994.0 140.5 L996.0 140.5 L998.0 140.5 L1000.0 140.5 L1002.0 140.5 L1004.0 140.5 L1006.0 140.5 L1008.0 140.5 L1010.0 140.5 L1012.0 140.5 L1014.0 140.5 L1016.0 140.5 L1018.0 140.5 L1020.0 140.5 L1022.0 140.5 L1024.0 140.5 L1026.0 140.5 L1028.0 140.5 L1030.0 140.5 L1032.0 140.5 L1034.0 140.5 L1036.0 140.5 L1038.0 140.5 L1040.0 140.5 L1042.0 140.5 L1044.0 140.5 L1046.0 140.5 L1048.0 140.5 L1050.0 140.5 L1052.0 140.5 L1054.0 140.5 L1056.0 140.5 L1058.0 140.5 L1060.0 140.5 L1062.0 140.5 L1064.0 140.5 L1066.0 140.5 L1068.0 140.5 L1070.0 140.5 L1072.0 140.5 L1074.0 140.5 L1076.0 140.5 L1078.0 140.5 L1080.0 140.5 L1082.0 140.5 L1084.0 140.5 L1086.0 140.5 L1088.0 140.5 L1090.0 140.5 L1092.0 140.5 L1094.0 140.5 L1096.0 140.5 L1098.0 140.5 L1100.0 140.5 L1102.0 140.5 L1104.0 140.5 L1106.0 140.5 L1108.0 140.5 L1110.0 140.5 L1112.0 140.5 L1114.0 140.5 L1116.0 140.5 L1118.0 140.5 L1120.0 140.5 L1122.0 140.5 L1124.0 140.5 L1126.0 140.5 L1128.0 140.5 L1130.0 140.5 L1132.0 140.5 L1134.0 140.5 L1136.0 140.5 L1138.0 140.5 L1140.0 140.5 L1142.0 140.5 L1144.0 140.5 L1146.0 140.5 L1148.0 140.5 L1150.0 140.5 L1152.0 140.5 L1154.0 140.5 L1156.0 140.5 L1158.0 140.5 L1160.0 140.5 L1162.0 140.5 L1164.0 140.5 L1166.0 140.5 L1168.0 140.5 L1170.0 140.5 L1172.0 140.5 L1174.0 140.5 L1176.0 140.5 L1178.0 140.5 L1180.0 140.5 L1182.0 140.5 L1184.0 140.5 L1186.0 140.5 L1188.0 140.5 L1190.0 140.5 L1192.0 140.5 L1194.0 140.5 L1196.0 140.5 L1198.0 140.5 L1200.0 140.5 L1202.0 140.5 L1204.0 140.5 L1206.0 140.5 L1208.0 140.5 L1210.0 140.5 L1212.0 140.5 L1214.0 140.5 L1216.0 140.5 L1218.0 140.5 L1220.0 140.5 L1222.0 140.5 L1224.0 140.5 L1226.0 140.5 L1228.0 140.5 L1230.0 140.5 L1232.0 140.5 L1234.0 140.5 L1236.0 140.5 L1238.0 140.5 L1240.0 140.5 L1242.0 140.5 L1244.0 140.5 L1246.0 140.5 L1248.0 140.5 L1250.0 140.5 L1252.0 140.5 L1254.0 140.5 L1256.0 140.5 L1258.0 140.5 L1260.0 140.5 L1262.0 140.5 L1264.0 140.5 L1266.0 140.5 L1268.0 140.5 L1270.0 140.5 L1272.0 140.5 L1274.0 140.5 L1276.0 140.5 L1278.0 140.5 L1280.0 140.5 L1282.0 140.5 L1284.0 140.5 L1286.0 140.5 L1288.0 140.5 L1290.0 140.5 L1292.0 140.5 L1294.0 140.5 L1296.0 140.5 L1298.0 140.5 L1300.0 140.5 L1302.0 140.5 L1304.0 140.5 L1306.0 140.5 L1308.0 140.5 L1310.0 140.5 L1312.0 140.5 L1314.0 140.5 L1316.0 140.5 L1318.0 140.5 L1320.0 140.5 L1322.0 140.5 L1324.0 140.5 L1326.0 140.5 L1328.0 140.5 L1330.0 140.5 L1332.0 140.5 L1334.0 140.5 L1336.0 140.5 L1338.0 140.5 L1340.0 140.5 L1342.0 140.5 L1344.0 140.5 L1346.0 140.5 L1348.0 140.5 L1350.0 140.5 L1352.0 140.5 L1354.0 140.5 L1356.0 140.5 L1358.0 140.5 L1360.0 140.5 L1362.0 140.5 L1364.0 140.5 L1366.0 140.5 L1368.0 140.5 L1370.0 140.5 L1372.0 140.5 L1374.0 140.5 L1376.0 140.5 L1378.0 140.5 L1380.0 140.5 L1382.0 140.5 L1384.0 140.5 L1386.0 140.5 L1388.0 140.5 L1390.0 140.5 L1392.0 140.5 L1394.0 140.5 L1396.0 140.5 L1398.0 140.5 L1400.0 140.5 L1402.0 140.5 L1404.0 140.5 L1406.0 140.5 L1408.0 140.5 L1410.0 140.5 L1412.0 140.5 L1414.0 140.5 L1416.0 140.5 L1418.0 140.5 L1420.0 140.5 L1422.0 140.5 L1424.0 140.5 L1426.0 140.5 L1428.0 140.5 L1430.0 140.5 L1432.0 140.5 L1434.0 140.5 L1436.0 140.5 L1438.0 140.5 L1440.0 140.5 L1442.0 140.5 L1444.0 140.5 L1446.0 140.5 L1448.0 140.5 L1450.0 140.5 L1452.0 140.5 L1454.0 140.5 L1456.0 140.5 L1458.0 140.5 L1460.0 140.5 L1462.0 140.5 L1464.0 140.5 L1466.0 140.5 L1468.0 140.5 L1470.0 140.5 L1472.0 140.5 L1474.0 140.5 L1476.0 140.5 L1478.0 140.5 L1480.0 140.5 L1482.0 140.5 L1484.0 140.5 L1486.0 140.5 L1488.0 140.5 L1490.0 140.5 L1492.0 140.5 L1494.0 140.5 L1496.0 140.5 L1498.0 140.5 L1500.0 140.5 L1502.0 140.5 L1504.0 140.5 L1506.0 140.5 L1508.0 140.5 L1510.0 140.5 L1512.0 140.5 L1514.0 140.5 L1516.0 140.5 L1518.0 140.5 L1520.0 140.5 L1522.0 140.5 L1524.0 140.5 L1526.0 140.5 L1528.0 140.5 L1530.0 140.5 L1532.0 140.5 L1534.0 140.5 L1536.0 140.5 L1538.0 140.5 L1540.0 140.5 L1542.0 140.5 L1544.0 140.5 L1546.0 140.5 L1548.0 140.5 L1550.0 140.5 L1552.0 140.5 L1554.0 140.5 L1556.0 140.5 L1558.0 140.5 L1560.0 140.5 L1562.0 140.5 L1564.0 140.5 L1566.0 140.5 L1568.0 140.5 L1570.0 140.5 L1572.0 140.5 L1574.0 140.5 L1576.0 140.5 L1578.0 140.5 L1580.0 140.5 L1582.0 140.5 L1584.0 140.5 L1586.0 140.5 L1588.0 140.5 L1590.0 140.5 L1592.0 140.5 L1594.0 140.5 L1596.0 140.5 L1598.0 140.5 L1600.0 140.5 L1602.0 140.5 L1604.0 140.5 L1606.0 140.5 L1608.0 140.5 L1610.0 140.5 L1612.0 140.5 L1614.0 140.5 L1616.0 140.5 L1618.0 140.5 L1620.0 140.5 L1622.0 140.5 L1624.0 140.5 L1626.0 140.5 L1628.0 140.5 L1630.0 140.5 L1632.0 140.5 L1634.0 140.5 L1636.0 140.5 L1638.0 140.5 L1640.0 140.5 L1642.0 140.5 L1644.0 140.5 L1646.0 140.5 L1648.0 140.5 L1650.0 140.5 L1652.0 140.5 L1654.0 140.5 L1656.0 140.5" stroke="#00b0b0" fill="none" shape-rendering="crispEdges"/><path d="M44 140.5H655" stroke="#00ff00" fill="none"/><text x="245" y="135" font-size="14" font-weight="bold" fill="#00ff00" text-anchor="middle">V(v+)</text><text x="648" y="135" font-size="14" font-weight="bold" fill="#0000ff" text-anchor="middle">V(v-)</text><text x="1051" y="135" font-size="14" font-weight="bold" fill="#ff0000" text-anchor="middle">V(n006)</text><text x="1454" y="135" font-size="14" font-weight="bold" fill="#00b0b0" text-anchor="middle">V(n003)</text></g><rect x="2" y="525" width="1676" height="427" fill="#858300"/><rect x="2" y="525" width="1676" height="1" fill="#ffff00"/><rect x="3" y="526" width="1674" height="1" fill="#ffff00"/><rect x="4" y="527" width="1672" height="1" fill="#000000"/><rect x="3" y="526" width="1" height="424" fill="#ffff00"/><rect x="4" y="527" width="1" height="423" fill="#000000"/><rect x="2" y="951" width="1676" height="1" fill="#504c00"/><rect x="3" y="950" width="1674" height="1" fill="#000000"/><rect x="4" y="949" width="1672" height="1" fill="#000000"/><rect x="1677" y="525" width="1" height="427" fill="#404040"/><rect x="1676" y="526" width="1" height="425" fill="#504c00"/><rect x="1675" y="527" width="1" height="423" fill="#000000"/><rect x="1674" y="528" width="1" height="422" fill="#000000"/><rect x="6" y="529" width="1668" height="18" fill="url(#gInact)"/><rect x="1622" y="531" width="16" height="14" fill="#858300"/><rect x="1622" y="531" width="16" height="1" fill="#ffff00"/><rect x="1622" y="531" width="1" height="14" fill="#ffff00"/><rect x="1622" y="544" width="16" height="1" fill="#2a2800"/><rect x="1637" y="531" width="1" height="14" fill="#2a2800"/><rect x="1623" y="543" width="14" height="1" fill="#6a6800"/><rect x="1636" y="532" width="1" height="12" fill="#6a6800"/><rect x="1626" y="540" width="6" height="2" fill="#000000"/><rect x="1638" y="531" width="16" height="14" fill="#858300"/><rect x="1638" y="531" width="16" height="1" fill="#ffff00"/><rect x="1638" y="531" width="1" height="14" fill="#ffff00"/><rect x="1638" y="544" width="16" height="1" fill="#2a2800"/><rect x="1653" y="531" width="1" height="14" fill="#2a2800"/><rect x="1639" y="543" width="14" height="1" fill="#6a6800"/><rect x="1652" y="532" width="1" height="12" fill="#6a6800"/><path d="M1641.5 533.5h8v8h-8z" fill="none" stroke="#000"/><rect x="1641" y="534" width="9" height="1" fill="#000000"/><rect x="1656" y="531" width="16" height="14" fill="#858300"/><rect x="1656" y="531" width="16" height="1" fill="#ffff00"/><rect x="1656" y="531" width="1" height="14" fill="#ffff00"/><rect x="1656" y="544" width="16" height="1" fill="#2a2800"/><rect x="1671" y="531" width="1" height="14" fill="#2a2800"/><rect x="1657" y="543" width="14" height="1" fill="#6a6800"/><rect x="1670" y="532" width="1" height="12" fill="#6a6800"/><path d="M1660.5 534.5l7 7M1667.5 534.5l-7 7" stroke="#000" stroke-width="1.8" fill="none" shape-rendering="geometricPrecision"/><text x="25" y="542" font-size="11.5" fill="#c0c0c0" font-weight="bold" text-anchor="start" letter-spacing="0.6">Integrator.asc</text><rect x="11" y="533" width="3" height="11" fill="#0000ff"/><rect x="9" y="537" width="3" height="1" fill="#0000ff"/><path d="M13 535 L18 530" stroke="#0000ff" stroke-width="1.3" fill="none" shape-rendering="geometricPrecision"/><path d="M13 541 L20 546" stroke="#0000ff" stroke-width="1.3" fill="none" shape-rendering="geometricPrecision"/><path d="M16 544 L19 545 L18 542Z" fill="#0000ff"/><rect x="7" y="549" width="1666" height="1" fill="#404040"/><rect x="7" y="549" width="1" height="399" fill="#404040"/><rect x="6" y="948" width="1668" height="1" fill="#ffff00"/><rect x="1673" y="548" width="1" height="401" fill="#ffff00"/><rect x="7" y="947" width="1666" height="1" fill="#858300"/><rect x="1672" y="549" width="1" height="399" fill="#858300"/><rect x="8" y="550" width="1664" height="397" fill="#c8c8c8"/><g id="sch"><path d="M11 554h1v1h-1zM24 554h1v1h-1zM37 554h1v1h-1zM50 554h1v1h-1zM62 554h1v1h-1zM75 554h1v1h-1zM88 554h1v1h-1zM100 554h1v1h-1zM113 554h1v1h-1zM126 554h1v1h-1zM139 554h1v1h-1zM151 554h1v1h-1zM164 554h1v1h-1zM177 554h1v1h-1zM189 554h1v1h-1zM202 554h1v1h-1zM215 554h1v1h-1zM227 554h1v1h-1zM240 554h1v1h-1zM253 554h1v1h-1zM266 554h1v1h-1zM278 554h1v1h-1zM291 554h1v1h-1zM304 554h1v1h-1zM316 554h1v1h-1zM329 554h1v1h-1zM342 554h1v1h-1zM355 554h1v1h-1zM367 554h1v1h-1zM380 554h1v1h-1zM393 554h1v1h-1zM405 554h1v1h-1zM418 554h1v1h-1zM431 554h1v1h-1zM444 554h1v1h-1zM456 554h1v1h-1zM469 554h1v1h-1zM482 554h1v1h-1zM494 554h1v1h-1zM507 554h1v1h-1zM520 554h1v1h-1zM533 554h1v1h-1zM545 554h1v1h-1zM558 554h1v1h-1zM571 554h1v1h-1zM583 554h1v1h-1zM596 554h1v1h-1zM609 554h1v1h-1zM622 554h1v1h-1zM634 554h1v1h-1zM647 554h1v1h-1zM660 554h1v1h-1zM672 554h1v1h-1zM685 554h1v1h-1zM698 554h1v1h-1zM711 554h1v1h-1zM723 554h1v1h-1zM736 554h1v1h-1zM749 554h1v1h-1zM761 554h1v1h-1zM774 554h1v1h-1zM787 554h1v1h-1zM799 554h1v1h-1zM812 554h1v1h-1zM825 554h1v1h-1zM838 554h1v1h-1zM850 554h1v1h-1zM863 554h1v1h-1zM876 554h1v1h-1zM888 554h1v1h-1zM901 554h1v1h-1zM914 554h1v1h-1zM927 554h1v1h-1zM939 554h1v1h-1zM952 554h1v1h-1zM965 554h1v1h-1zM977 554h1v1h-1zM990 554h1v1h-1zM1003 554h1v1h-1zM1016 554h1v1h-1zM1028 554h1v1h-1zM1041 554h1v1h-1zM1054 554h1v1h-1zM1066 554h1v1h-1zM1079 554h1v1h-1zM1092 554h1v1h-1zM1105 554h1v1h-1zM1117 554h1v1h-1zM1130 554h1v1h-1zM1143 554h1v1h-1zM1155 554h1v1h-1zM1168 554h1v1h-1zM1181 554h1v1h-1zM1194 554h1v1h-1zM1206 554h1v1h-1zM1219 554h1v1h-1zM1232 554h1v1h-1zM1244 554h1v1h-1zM1257 554h1v1h-1zM1270 554h1v1h-1zM1283 554h1v1h-1zM1295 554h1v1h-1zM1308 554h1v1h-1zM1321 554h1v1h-1zM1333 554h1v1h-1zM1346 554h1v1h-1zM1359 554h1v1h-1zM1371 554h1v1h-1zM1384 554h1v1h-1zM1397 554h1v1h-1zM1410 554h1v1h-1zM1422 554h1v1h-1zM1435 554h1v1h-1zM1448 554h1v1h-1zM1460 554h1v1h-1zM1473 554h1v1h-1zM1486 554h1v1h-1zM1499 554h1v1h-1zM1511 554h1v1h-1zM1524 554h1v1h-1zM1537 554h1v1h-1zM1549 554h1v1h-1zM1562 554h1v1h-1zM1575 554h1v1h-1zM1588 554h1v1h-1zM1600 554h1v1h-1zM1613 554h1v1h-1zM1626 554h1v1h-1zM1638 554h1v1h-1zM1651 554h1v1h-1zM1664 554h1v1h-1zM11 567h1v1h-1zM24 567h1v1h-1zM37 567h1v1h-1zM50 567h1v1h-1zM62 567h1v1h-1zM75 567h1v1h-1zM88 567h1v1h-1zM100 567h1v1h-1zM113 567h1v1h-1zM126 567h1v1h-1zM139 567h1v1h-1zM151 567h1v1h-1zM164 567h1v1h-1zM177 567h1v1h-1zM189 567h1v1h-1zM202 567h1v1h-1zM215 567h1v1h-1zM227 567h1v1h-1zM240 567h1v1h-1zM253 567h1v1h-1zM266 567h1v1h-1zM278 567h1v1h-1zM291 567h1v1h-1zM304 567h1v1h-1zM316 567h1v1h-1zM329 567h1v1h-1zM342 567h1v1h-1zM355 567h1v1h-1zM367 567h1v1h-1zM380 567h1v1h-1zM393 567h1v1h-1zM405 567h1v1h-1zM418 567h1v1h-1zM431 567h1v1h-1zM444 567h1v1h-1zM456 567h1v1h-1zM469 567h1v1h-1zM482 567h1v1h-1zM494 567h1v1h-1zM507 567h1v1h-1zM520 567h1v1h-1zM533 567h1v1h-1zM545 567h1v1h-1zM558 567h1v1h-1zM571 567h1v1h-1zM583 567h1v1h-1zM596 567h1v1h-1zM609 567h1v1h-1zM622 567h1v1h-1zM634 567h1v1h-1zM647 567h1v1h-1zM660 567h1v1h-1zM672 567h1v1h-1zM685 567h1v1h-1zM698 567h1v1h-1zM711 567h1v1h-1zM723 567h1v1h-1zM736 567h1v1h-1zM749 567h1v1h-1zM761 567h1v1h-1zM774 567h1v1h-1zM787 567h1v1h-1zM799 567h1v1h-1zM812 567h1v1h-1zM825 567h1v1h-1zM838 567h1v1h-1zM850 567h1v1h-1zM863 567h1v1h-1zM876 567h1v1h-1zM888 567h1v1h-1zM901 567h1v1h-1zM914 567h1v1h-1zM927 567h1v1h-1zM939 567h1v1h-1zM952 567h1v1h-1zM965 567h1v1h-1zM977 567h1v1h-1zM990 567h1v1h-1zM1003 567h1v1h-1zM1016 567h1v1h-1zM1028 567h1v1h-1zM1041 567h1v1h-1zM1054 567h1v1h-1zM1066 567h1v1h-1zM1079 567h1v1h-1zM1092 567h1v1h-1zM1105 567h1v1h-1zM1117 567h1v1h-1zM1130 567h1v1h-1zM1143 567h1v1h-1zM1155 567h1v1h-1zM1168 567h1v1h-1zM1181 567h1v1h-1zM1194 567h1v1h-1zM1206 567h1v1h-1zM1219 567h1v1h-1zM1232 567h1v1h-1zM1244 567h1v1h-1zM1257 567h1v1h-1zM1270 567h1v1h-1zM1283 567h1v1h-1zM1295 567h1v1h-1zM1308 567h1v1h-1zM1321 567h1v1h-1zM1333 567h1v1h-1zM1346 567h1v1h-1zM1359 567h1v1h-1zM1371 567h1v1h-1zM1384 567h1v1h-1zM1397 567h1v1h-1zM1410 567h1v1h-1zM1422 567h1v1h-1zM1435 567h1v1h-1zM1448 567h1v1h-1zM1460 567h1v1h-1zM1473 567h1v1h-1zM1486 567h1v1h-1zM1499 567h1v1h-1zM1511 567h1v1h-1zM1524 567h1v1h-1zM1537 567h1v1h-1zM1549 567h1v1h-1zM1562 567h1v1h-1zM1575 567h1v1h-1zM1588 567h1v1h-1zM1600 567h1v1h-1zM1613 567h1v1h-1zM1626 567h1v1h-1zM1638 567h1v1h-1zM1651 567h1v1h-1zM1664 567h1v1h-1zM11 579h1v1h-1zM24 579h1v1h-1zM37 579h1v1h-1zM50 579h1v1h-1zM62 579h1v1h-1zM75 579h1v1h-1zM88 579h1v1h-1zM100 579h1v1h-1zM113 579h1v1h-1zM126 579h1v1h-1zM139 579h1v1h-1zM151 579h1v1h-1zM164 579h1v1h-1zM177 579h1v1h-1zM189 579h1v1h-1zM202 579h1v1h-1zM215 579h1v1h-1zM227 579h1v1h-1zM240 579h1v1h-1zM253 579h1v1h-1zM266 579h1v1h-1zM278 579h1v1h-1zM291 579h1v1h-1zM304 579h1v1h-1zM316 579h1v1h-1zM329 579h1v1h-1zM342 579h1v1h-1zM355 579h1v1h-1zM367 579h1v1h-1zM380 579h1v1h-1zM393 579h1v1h-1zM405 579h1v1h-1zM418 579h1v1h-1zM431 579h1v1h-1zM444 579h1v1h-1zM456 579h1v1h-1zM469 579h1v1h-1zM482 579h1v1h-1zM494 579h1v1h-1zM507 579h1v1h-1zM520 579h1v1h-1zM533 579h1v1h-1zM545 579h1v1h-1zM558 579h1v1h-1zM571 579h1v1h-1zM583 579h1v1h-1zM596 579h1v1h-1zM609 579h1v1h-1zM622 579h1v1h-1zM634 579h1v1h-1zM647 579h1v1h-1zM660 579h1v1h-1zM672 579h1v1h-1zM685 579h1v1h-1zM698 579h1v1h-1zM711 579h1v1h-1zM723 579h1v1h-1zM736 579h1v1h-1zM749 579h1v1h-1zM761 579h1v1h-1zM774 579h1v1h-1zM787 579h1v1h-1zM799 579h1v1h-1zM812 579h1v1h-1zM825 579h1v1h-1zM838 579h1v1h-1zM850 579h1v1h-1zM863 579h1v1h-1zM876 579h1v1h-1zM888 579h1v1h-1zM901 579h1v1h-1zM914 579h1v1h-1zM927 579h1v1h-1zM939 579h1v1h-1zM952 579h1v1h-1zM965 579h1v1h-1zM977 579h1v1h-1zM990 579h1v1h-1zM1003 579h1v1h-1zM1016 579h1v1h-1zM1028 579h1v1h-1zM1041 579h1v1h-1zM1054 579h1v1h-1zM1066 579h1v1h-1zM1079 579h1v1h-1zM1092 579h1v1h-1zM1105 579h1v1h-1zM1117 579h1v1h-1zM1130 579h1v1h-1zM1143 579h1v1h-1zM1155 579h1v1h-1zM1168 579h1v1h-1zM1181 579h1v1h-1zM1194 579h1v1h-1zM1206 579h1v1h-1zM1219 579h1v1h-1zM1232 579h1v1h-1zM1244 579h1v1h-1zM1257 579h1v1h-1zM1270 579h1v1h-1zM1283 579h1v1h-1zM1295 579h1v1h-1zM1308 579h1v1h-1zM1321 579h1v1h-1zM1333 579h1v1h-1zM1346 579h1v1h-1zM1359 579h1v1h-1zM1371 579h1v1h-1zM1384 579h1v1h-1zM1397 579h1v1h-1zM1410 579h1v1h-1zM1422 579h1v1h-1zM1435 579h1v1h-1zM1448 579h1v1h-1zM1460 579h1v1h-1zM1473 579h1v1h-1zM1486 579h1v1h-1zM1499 579h1v1h-1zM1511 579h1v1h-1zM1524 579h1v1h-1zM1537 579h1v1h-1zM1549 579h1v1h-1zM1562 579h1v1h-1zM1575 579h1v1h-1zM1588 579h1v1h-1zM1600 579h1v1h-1zM1613 579h1v1h-1zM1626 579h1v1h-1zM1638 579h1v1h-1zM1651 579h1v1h-1zM1664 579h1v1h-1zM11 592h1v1h-1zM24 592h1v1h-1zM37 592h1v1h-1zM50 592h1v1h-1zM62 592h1v1h-1zM75 592h1v1h-1zM88 592h1v1h-1zM100 592h1v1h-1zM113 592h1v1h-1zM126 592h1v1h-1zM139 592h1v1h-1zM151 592h1v1h-1zM164 592h1v1h-1zM177 592h1v1h-1zM189 592h1v1h-1zM202 592h1v1h-1zM215 592h1v1h-1zM227 592h1v1h-1zM240 592h1v1h-1zM253 592h1v1h-1zM266 592h1v1h-1zM278 592h1v1h-1zM291 592h1v1h-1zM304 592h1v1h-1zM316 592h1v1h-1zM329 592h1v1h-1zM342 592h1v1h-1zM355 592h1v1h-1zM367 592h1v1h-1zM380 592h1v1h-1zM393 592h1v1h-1zM405 592h1v1h-1zM418 592h1v1h-1zM431 592h1v1h-1zM444 592h1v1h-1zM456 592h1v1h-1zM469 592h1v1h-1zM482 592h1v1h-1zM494 592h1v1h-1zM507 592h1v1h-1zM520 592h1v1h-1zM533 592h1v1h-1zM545 592h1v1h-1zM558 592h1v1h-1zM571 592h1v1h-1zM583 592h1v1h-1zM596 592h1v1h-1zM609 592h1v1h-1zM622 592h1v1h-1zM634 592h1v1h-1zM647 592h1v1h-1zM660 592h1v1h-1zM672 592h1v1h-1zM685 592h1v1h-1zM698 592h1v1h-1zM711 592h1v1h-1zM723 592h1v1h-1zM736 592h1v1h-1zM749 592h1v1h-1zM761 592h1v1h-1zM774 592h1v1h-1zM787 592h1v1h-1zM799 592h1v1h-1zM812 592h1v1h-1zM825 592h1v1h-1zM838 592h1v1h-1zM850 592h1v1h-1zM863 592h1v1h-1zM876 592h1v1h-1zM888 592h1v1h-1zM901 592h1v1h-1zM914 592h1v1h-1zM927 592h1v1h-1zM939 592h1v1h-1zM952 592h1v1h-1zM965 592h1v1h-1zM977 592h1v1h-1zM990 592h1v1h-1zM1003 592h1v1h-1zM1016 592h1v1h-1zM1028 592h1v1h-1zM1041 592h1v1h-1zM1054 592h1v1h-1zM1066 592h1v1h-1zM1079 592h1v1h-1zM1092 592h1v1h-1zM1105 592h1v1h-1zM1117 592h1v1h-1zM1130 592h1v1h-1zM1143 592h1v1h-1zM1155 592h1v1h-1zM1168 592h1v1h-1zM1181 592h1v1h-1zM1194 592h1v1h-1zM1206 592h1v1h-1zM1219 592h1v1h-1zM1232 592h1v1h-1zM1244 592h1v1h-1zM1257 592h1v1h-1zM1270 592h1v1h-1zM1283 592h1v1h-1zM1295 592h1v1h-1zM1308 592h1v1h-1zM1321 592h1v1h-1zM1333 592h1v1h-1zM1346 592h1v1h-1zM1359 592h1v1h-1zM1371 592h1v1h-1zM1384 592h1v1h-1zM1397 592h1v1h-1zM1410 592h1v1h-1zM1422 592h1v1h-1zM1435 592h1v1h-1zM1448 592h1v1h-1zM1460 592h1v1h-1zM1473 592h1v1h-1zM1486 592h1v1h-1zM1499 592h1v1h-1zM1511 592h1v1h-1zM1524 592h1v1h-1zM1537 592h1v1h-1zM1549 592h1v1h-1zM1562 592h1v1h-1zM1575 592h1v1h-1zM1588 592h1v1h-1zM1600 592h1v1h-1zM1613 592h1v1h-1zM1626 592h1v1h-1zM1638 592h1v1h-1zM1651 592h1v1h-1zM1664 592h1v1h-1zM11 605h1v1h-1zM24 605h1v1h-1zM37 605h1v1h-1zM50 605h1v1h-1zM62 605h1v1h-1zM75 605h1v1h-1zM88 605h1v1h-1zM100 605h1v1h-1zM113 605h1v1h-1zM126 605h1v1h-1zM139 605h1v1h-1zM151 605h1v1h-1zM164 605h1v1h-1zM177 605h1v1h-1zM189 605h1v1h-1zM202 605h1v1h-1zM215 605h1v1h-1zM227 605h1v1h-1zM240 605h1v1h-1zM253 605h1v1h-1zM266 605h1v1h-1zM278 605h1v1h-1zM291 605h1v1h-1zM304 605h1v1h-1zM316 605h1v1h-1zM329 605h1v1h-1zM342 605h1v1h-1zM355 605h1v1h-1zM367 605h1v1h-1zM380 605h1v1h-1zM393 605h1v1h-1zM405 605h1v1h-1zM418 605h1v1h-1zM431 605h1v1h-1zM444 605h1v1h-1zM456 605h1v1h-1zM469 605h1v1h-1zM482 605h1v1h-1zM494 605h1v1h-1zM507 605h1v1h-1zM520 605h1v1h-1zM533 605h1v1h-1zM545 605h1v1h-1zM558 605h1v1h-1zM571 605h1v1h-1zM583 605h1v1h-1zM596 605h1v1h-1zM609 605h1v1h-1zM622 605h1v1h-1zM634 605h1v1h-1zM647 605h1v1h-1zM660 605h1v1h-1zM672 605h1v1h-1zM685 605h1v1h-1zM698 605h1v1h-1zM711 605h1v1h-1zM723 605h1v1h-1zM736 605h1v1h-1zM749 605h1v1h-1zM761 605h1v1h-1zM774 605h1v1h-1zM787 605h1v1h-1zM799 605h1v1h-1zM812 605h1v1h-1zM825 605h1v1h-1zM838 605h1v1h-1zM850 605h1v1h-1zM863 605h1v1h-1zM876 605h1v1h-1zM888 605h1v1h-1zM901 605h1v1h-1zM914 605h1v1h-1zM927 605h1v1h-1zM939 605h1v1h-1zM952 605h1v1h-1zM965 605h1v1h-1zM977 605h1v1h-1zM990 605h1v1h-1zM1003 605h1v1h-1zM1016 605h1v1h-1zM1028 605h1v1h-1zM1041 605h1v1h-1zM1054 605h1v1h-1zM1066 605h1v1h-1zM1079 605h1v1h-1zM1092 605h1v1h-1zM1105 605h1v1h-1zM1117 605h1v1h-1zM1130 605h1v1h-1zM1143 605h1v1h-1zM1155 605h1v1h-1zM1168 605h1v1h-1zM1181 605h1v1h-1zM1194 605h1v1h-1zM1206 605h1v1h-1zM1219 605h1v1h-1zM1232 605h1v1h-1zM1244 605h1v1h-1zM1257 605h1v1h-1zM1270 605h1v1h-1zM1283 605h1v1h-1zM1295 605h1v1h-1zM1308 605h1v1h-1zM1321 605h1v1h-1zM1333 605h1v1h-1zM1346 605h1v1h-1zM1359 605h1v1h-1zM1371 605h1v1h-1zM1384 605h1v1h-1zM1397 605h1v1h-1zM1410 605h1v1h-1zM1422 605h1v1h-1zM1435 605h1v1h-1zM1448 605h1v1h-1zM1460 605h1v1h-1zM1473 605h1v1h-1zM1486 605h1v1h-1zM1499 605h1v1h-1zM1511 605h1v1h-1zM1524 605h1v1h-1zM1537 605h1v1h-1zM1549 605h1v1h-1zM1562 605h1v1h-1zM1575 605h1v1h-1zM1588 605h1v1h-1zM1600 605h1v1h-1zM1613 605h1v1h-1zM1626 605h1v1h-1zM1638 605h1v1h-1zM1651 605h1v1h-1zM1664 605h1v1h-1zM11 617h1v1h-1zM24 617h1v1h-1zM37 617h1v1h-1zM50 617h1v1h-1zM62 617h1v1h-1zM75 617h1v1h-1zM88 617h1v1h-1zM100 617h1v1h-1zM113 617h1v1h-1zM126 617h1v1h-1zM139 617h1v1h-1zM151 617h1v1h-1zM164 617h1v1h-1zM177 617h1v1h-1zM189 617h1v1h-1zM202 617h1v1h-1zM215 617h1v1h-1zM227 617h1v1h-1zM240 617h1v1h-1zM253 617h1v1h-1zM266 617h1v1h-1zM278 617h1v1h-1zM291 617h1v1h-1zM304 617h1v1h-1zM316 617h1v1h-1zM329 617h1v1h-1zM342 617h1v1h-1zM355 617h1v1h-1zM367 617h1v1h-1zM380 617h1v1h-1zM393 617h1v1h-1zM405 617h1v1h-1zM418 617h1v1h-1zM431 617h1v1h-1zM444 617h1v1h-1zM456 617h1v1h-1zM469 617h1v1h-1zM482 617h1v1h-1zM494 617h1v1h-1zM507 617h1v1h-1zM520 617h1v1h-1zM533 617h1v1h-1zM545 617h1v1h-1zM558 617h1v1h-1zM571 617h1v1h-1zM583 617h1v1h-1zM596 617h1v1h-1zM609 617h1v1h-1zM622 617h1v1h-1zM634 617h1v1h-1zM647 617h1v1h-1zM660 617h1v1h-1zM672 617h1v1h-1zM685 617h1v1h-1zM698 617h1v1h-1zM711 617h1v1h-1zM723 617h1v1h-1zM736 617h1v1h-1zM749 617h1v1h-1zM761 617h1v1h-1zM774 617h1v1h-1zM787 617h1v1h-1zM799 617h1v1h-1zM812 617h1v1h-1zM825 617h1v1h-1zM838 617h1v1h-1zM850 617h1v1h-1zM863 617h1v1h-1zM876 617h1v1h-1zM888 617h1v1h-1zM901 617h1v1h-1zM914 617h1v1h-1zM927 617h1v1h-1zM939 617h1v1h-1zM952 617h1v1h-1zM965 617h1v1h-1zM977 617h1v1h-1zM990 617h1v1h-1zM1003 617h1v1h-1zM1016 617h1v1h-1zM1028 617h1v1h-1zM1041 617h1v1h-1zM1054 617h1v1h-1zM1066 617h1v1h-1zM1079 617h1v1h-1zM1092 617h1v1h-1zM1105 617h1v1h-1zM1117 617h1v1h-1zM1130 617h1v1h-1zM1143 617h1v1h-1zM1155 617h1v1h-1zM1168 617h1v1h-1zM1181 617h1v1h-1zM1194 617h1v1h-1zM1206 617h1v1h-1zM1219 617h1v1h-1zM1232 617h1v1h-1zM1244 617h1v1h-1zM1257 617h1v1h-1zM1270 617h1v1h-1zM1283 617h1v1h-1zM1295 617h1v1h-1zM1308 617h1v1h-1zM1321 617h1v1h-1zM1333 617h1v1h-1zM1346 617h1v1h-1zM1359 617h1v1h-1zM1371 617h1v1h-1zM1384 617h1v1h-1zM1397 617h1v1h-1zM1410 617h1v1h-1zM1422 617h1v1h-1zM1435 617h1v1h-1zM1448 617h1v1h-1zM1460 617h1v1h-1zM1473 617h1v1h-1zM1486 617h1v1h-1zM1499 617h1v1h-1zM1511 617h1v1h-1zM1524 617h1v1h-1zM1537 617h1v1h-1zM1549 617h1v1h-1zM1562 617h1v1h-1zM1575 617h1v1h-1zM1588 617h1v1h-1zM1600 617h1v1h-1zM1613 617h1v1h-1zM1626 617h1v1h-1zM1638 617h1v1h-1zM1651 617h1v1h-1zM1664 617h1v1h-1zM11 630h1v1h-1zM24 630h1v1h-1zM37 630h1v1h-1zM50 630h1v1h-1zM62 630h1v1h-1zM75 630h1v1h-1zM88 630h1v1h-1zM100 630h1v1h-1zM113 630h1v1h-1zM126 630h1v1h-1zM139 630h1v1h-1zM151 630h1v1h-1zM164 630h1v1h-1zM177 630h1v1h-1zM189 630h1v1h-1zM202 630h1v1h-1zM215 630h1v1h-1zM227 630h1v1h-1zM240 630h1v1h-1zM253 630h1v1h-1zM266 630h1v1h-1zM278 630h1v1h-1zM291 630h1v1h-1zM304 630h1v1h-1zM316 630h1v1h-1zM329 630h1v1h-1zM342 630h1v1h-1zM355 630h1v1h-1zM367 630h1v1h-1zM380 630h1v1h-1zM393 630h1v1h-1zM405 630h1v1h-1zM418 630h1v1h-1zM431 630h1v1h-1zM444 630h1v1h-1zM456 630h1v1h-1zM469 630h1v1h-1zM482 630h1v1h-1zM494 630h1v1h-1zM507 630h1v1h-1zM520 630h1v1h-1zM533 630h1v1h-1zM545 630h1v1h-1zM558 630h1v1h-1zM571 630h1v1h-1zM583 630h1v1h-1zM596 630h1v1h-1zM609 630h1v1h-1zM622 630h1v1h-1zM634 630h1v1h-1zM647 630h1v1h-1zM660 630h1v1h-1zM672 630h1v1h-1zM685 630h1v1h-1zM698 630h1v1h-1zM711 630h1v1h-1zM723 630h1v1h-1zM736 630h1v1h-1zM749 630h1v1h-1zM761 630h1v1h-1zM774 630h1v1h-1zM787 630h1v1h-1zM799 630h1v1h-1zM812 630h1v1h-1zM825 630h1v1h-1zM838 630h1v1h-1zM850 630h1v1h-1zM863 630h1v1h-1zM876 630h1v1h-1zM888 630h1v1h-1zM901 630h1v1h-1zM914 630h1v1h-1zM927 630h1v1h-1zM939 630h1v1h-1zM952 630h1v1h-1zM965 630h1v1h-1zM977 630h1v1h-1zM990 630h1v1h-1zM1003 630h1v1h-1zM1016 630h1v1h-1zM1028 630h1v1h-1zM1041 630h1v1h-1zM1054 630h1v1h-1zM1066 630h1v1h-1zM1079 630h1v1h-1zM1092 630h1v1h-1zM1105 630h1v1h-1zM1117 630h1v1h-1zM1130 630h1v1h-1zM1143 630h1v1h-1zM1155 630h1v1h-1zM1168 630h1v1h-1zM1181 630h1v1h-1zM1194 630h1v1h-1zM1206 630h1v1h-1zM1219 630h1v1h-1zM1232 630h1v1h-1zM1244 630h1v1h-1zM1257 630h1v1h-1zM1270 630h1v1h-1zM1283 630h1v1h-1zM1295 630h1v1h-1zM1308 630h1v1h-1zM1321 630h1v1h-1zM1333 630h1v1h-1zM1346 630h1v1h-1zM1359 630h1v1h-1zM1371 630h1v1h-1zM1384 630h1v1h-1zM1397 630h1v1h-1zM1410 630h1v1h-1zM1422 630h1v1h-1zM1435 630h1v1h-1zM1448 630h1v1h-1zM1460 630h1v1h-1zM1473 630h1v1h-1zM1486 630h1v1h-1zM1499 630h1v1h-1zM1511 630h1v1h-1zM1524 630h1v1h-1zM1537 630h1v1h-1zM1549 630h1v1h-1zM1562 630h1v1h-1zM1575 630h1v1h-1zM1588 630h1v1h-1zM1600 630h1v1h-1zM1613 630h1v1h-1zM1626 630h1v1h-1zM1638 630h1v1h-1zM1651 630h1v1h-1zM1664 630h1v1h-1zM11 643h1v1h-1zM24 643h1v1h-1zM37 643h1v1h-1zM50 643h1v1h-1zM62 643h1v1h-1zM75 643h1v1h-1zM88 643h1v1h-1zM100 643h1v1h-1zM113 643h1v1h-1zM126 643h1v1h-1zM139 643h1v1h-1zM151 643h1v1h-1zM164 643h1v1h-1zM177 643h1v1h-1zM189 643h1v1h-1zM202 643h1v1h-1zM215 643h1v1h-1zM227 643h1v1h-1zM240 643h1v1h-1zM253 643h1v1h-1zM266 643h1v1h-1zM278 643h1v1h-1zM291 643h1v1h-1zM304 643h1v1h-1zM316 643h1v1h-1zM329 643h1v1h-1zM342 643h1v1h-1zM355 643h1v1h-1zM367 643h1v1h-1zM380 643h1v1h-1zM393 643h1v1h-1zM405 643h1v1h-1zM418 643h1v1h-1zM431 643h1v1h-1zM444 643h1v1h-1zM456 643h1v1h-1zM469 643h1v1h-1zM482 643h1v1h-1zM494 643h1v1h-1zM507 643h1v1h-1zM520 643h1v1h-1zM533 643h1v1h-1zM545 643h1v1h-1zM558 643h1v1h-1zM571 643h1v1h-1zM583 643h1v1h-1zM596 643h1v1h-1zM609 643h1v1h-1zM622 643h1v1h-1zM634 643h1v1h-1zM647 643h1v1h-1zM660 643h1v1h-1zM672 643h1v1h-1zM685 643h1v1h-1zM698 643h1v1h-1zM711 643h1v1h-1zM723 643h1v1h-1zM736 643h1v1h-1zM749 643h1v1h-1zM761 643h1v1h-1zM774 643h1v1h-1zM787 643h1v1h-1zM799 643h1v1h-1zM812 643h1v1h-1zM825 643h1v1h-1zM838 643h1v1h-1zM850 643h1v1h-1zM863 643h1v1h-1zM876 643h1v1h-1zM888 643h1v1h-1zM901 643h1v1h-1zM914 643h1v1h-1zM927 643h1v1h-1zM939 643h1v1h-1zM952 643h1v1h-1zM965 643h1v1h-1zM977 643h1v1h-1zM990 643h1v1h-1zM1003 643h1v1h-1zM1016 643h1v1h-1zM1028 643h1v1h-1zM1041 643h1v1h-1zM1054 643h1v1h-1zM1066 643h1v1h-1zM1079 643h1v1h-1zM1092 643h1v1h-1zM1105 643h1v1h-1zM1117 643h1v1h-1zM1130 643h1v1h-1zM1143 643h1v1h-1zM1155 643h1v1h-1zM1168 643h1v1h-1zM1181 643h1v1h-1zM1194 643h1v1h-1zM1206 643h1v1h-1zM1219 643h1v1h-1zM1232 643h1v1h-1zM1244 643h1v1h-1zM1257 643h1v1h-1zM1270 643h1v1h-1zM1283 643h1v1h-1zM1295 643h1v1h-1zM1308 643h1v1h-1zM1321 643h1v1h-1zM1333 643h1v1h-1zM1346 643h1v1h-1zM1359 643h1v1h-1zM1371 643h1v1h-1zM1384 643h1v1h-1zM1397 643h1v1h-1zM1410 643h1v1h-1zM1422 643h1v1h-1zM1435 643h1v1h-1zM1448 643h1v1h-1zM1460 643h1v1h-1zM1473 643h1v1h-1zM1486 643h1v1h-1zM1499 643h1v1h-1zM1511 643h1v1h-1zM1524 643h1v1h-1zM1537 643h1v1h-1zM1549 643h1v1h-1zM1562 643h1v1h-1zM1575 643h1v1h-1zM1588 643h1v1h-1zM1600 643h1v1h-1zM1613 643h1v1h-1zM1626 643h1v1h-1zM1638 643h1v1h-1zM1651 643h1v1h-1zM1664 643h1v1h-1zM11 656h1v1h-1zM24 656h1v1h-1zM37 656h1v1h-1zM50 656h1v1h-1zM62 656h1v1h-1zM75 656h1v1h-1zM88 656h1v1h-1zM100 656h1v1h-1zM113 656h1v1h-1zM126 656h1v1h-1zM139 656h1v1h-1zM151 656h1v1h-1zM164 656h1v1h-1zM177 656h1v1h-1zM189 656h1v1h-1zM202 656h1v1h-1zM215 656h1v1h-1zM227 656h1v1h-1zM240 656h1v1h-1zM253 656h1v1h-1zM266 656h1v1h-1zM278 656h1v1h-1zM291 656h1v1h-1zM304 656h1v1h-1zM316 656h1v1h-1zM329 656h1v1h-1zM342 656h1v1h-1zM355 656h1v1h-1zM367 656h1v1h-1zM380 656h1v1h-1zM393 656h1v1h-1zM405 656h1v1h-1zM418 656h1v1h-1zM431 656h1v1h-1zM444 656h1v1h-1zM456 656h1v1h-1zM469 656h1v1h-1zM482 656h1v1h-1zM494 656h1v1h-1zM507 656h1v1h-1zM520 656h1v1h-1zM533 656h1v1h-1zM545 656h1v1h-1zM558 656h1v1h-1zM571 656h1v1h-1zM583 656h1v1h-1zM596 656h1v1h-1zM609 656h1v1h-1zM622 656h1v1h-1zM634 656h1v1h-1zM647 656h1v1h-1zM660 656h1v1h-1zM672 656h1v1h-1zM685 656h1v1h-1zM698 656h1v1h-1zM711 656h1v1h-1zM723 656h1v1h-1zM736 656h1v1h-1zM749 656h1v1h-1zM761 656h1v1h-1zM774 656h1v1h-1zM787 656h1v1h-1zM799 656h1v1h-1zM812 656h1v1h-1zM825 656h1v1h-1zM838 656h1v1h-1zM850 656h1v1h-1zM863 656h1v1h-1zM876 656h1v1h-1zM888 656h1v1h-1zM901 656h1v1h-1zM914 656h1v1h-1zM927 656h1v1h-1zM939 656h1v1h-1zM952 656h1v1h-1zM965 656h1v1h-1zM977 656h1v1h-1zM990 656h1v1h-1zM1003 656h1v1h-1zM1016 656h1v1h-1zM1028 656h1v1h-1zM1041 656h1v1h-1zM1054 656h1v1h-1zM1066 656h1v1h-1zM1079 656h1v1h-1zM1092 656h1v1h-1zM1105 656h1v1h-1zM1117 656h1v1h-1zM1130 656h1v1h-1zM1143 656h1v1h-1zM1155 656h1v1h-1zM1168 656h1v1h-1zM1181 656h1v1h-1zM1194 656h1v1h-1zM1206 656h1v1h-1zM1219 656h1v1h-1zM1232 656h1v1h-1zM1244 656h1v1h-1zM1257 656h1v1h-1zM1270 656h1v1h-1zM1283 656h1v1h-1zM1295 656h1v1h-1zM1308 656h1v1h-1zM1321 656h1v1h-1zM1333 656h1v1h-1zM1346 656h1v1h-1zM1359 656h1v1h-1zM1371 656h1v1h-1zM1384 656h1v1h-1zM1397 656h1v1h-1zM1410 656h1v1h-1zM1422 656h1v1h-1zM1435 656h1v1h-1zM1448 656h1v1h-1zM1460 656h1v1h-1zM1473 656h1v1h-1zM1486 656h1v1h-1zM1499 656h1v1h-1zM1511 656h1v1h-1zM1524 656h1v1h-1zM1537 656h1v1h-1zM1549 656h1v1h-1zM1562 656h1v1h-1zM1575 656h1v1h-1zM1588 656h1v1h-1zM1600 656h1v1h-1zM1613 656h1v1h-1zM1626 656h1v1h-1zM1638 656h1v1h-1zM1651 656h1v1h-1zM1664 656h1v1h-1zM11 668h1v1h-1zM24 668h1v1h-1zM37 668h1v1h-1zM50 668h1v1h-1zM62 668h1v1h-1zM75 668h1v1h-1zM88 668h1v1h-1zM100 668h1v1h-1zM113 668h1v1h-1zM126 668h1v1h-1zM139 668h1v1h-1zM151 668h1v1h-1zM164 668h1v1h-1zM177 668h1v1h-1zM189 668h1v1h-1zM202 668h1v1h-1zM215 668h1v1h-1zM227 668h1v1h-1zM240 668h1v1h-1zM253 668h1v1h-1zM266 668h1v1h-1zM278 668h1v1h-1zM291 668h1v1h-1zM304 668h1v1h-1zM316 668h1v1h-1zM329 668h1v1h-1zM342 668h1v1h-1zM355 668h1v1h-1zM367 668h1v1h-1zM380 668h1v1h-1zM393 668h1v1h-1zM405 668h1v1h-1zM418 668h1v1h-1zM431 668h1v1h-1zM444 668h1v1h-1zM456 668h1v1h-1zM469 668h1v1h-1zM482 668h1v1h-1zM494 668h1v1h-1zM507 668h1v1h-1zM520 668h1v1h-1zM533 668h1v1h-1zM545 668h1v1h-1zM558 668h1v1h-1zM571 668h1v1h-1zM583 668h1v1h-1zM596 668h1v1h-1zM609 668h1v1h-1zM622 668h1v1h-1zM634 668h1v1h-1zM647 668h1v1h-1zM660 668h1v1h-1zM672 668h1v1h-1zM685 668h1v1h-1zM698 668h1v1h-1zM711 668h1v1h-1zM723 668h1v1h-1zM736 668h1v1h-1zM749 668h1v1h-1zM761 668h1v1h-1zM774 668h1v1h-1zM787 668h1v1h-1zM799 668h1v1h-1zM812 668h1v1h-1zM825 668h1v1h-1zM838 668h1v1h-1zM850 668h1v1h-1zM863 668h1v1h-1zM876 668h1v1h-1zM888 668h1v1h-1zM901 668h1v1h-1zM914 668h1v1h-1zM927 668h1v1h-1zM939 668h1v1h-1zM952 668h1v1h-1zM965 668h1v1h-1zM977 668h1v1h-1zM990 668h1v1h-1zM1003 668h1v1h-1zM1016 668h1v1h-1zM1028 668h1v1h-1zM1041 668h1v1h-1zM1054 668h1v1h-1zM1066 668h1v1h-1zM1079 668h1v1h-1zM1092 668h1v1h-1zM1105 668h1v1h-1zM1117 668h1v1h-1zM1130 668h1v1h-1zM1143 668h1v1h-1zM1155 668h1v1h-1zM1168 668h1v1h-1zM1181 668h1v1h-1zM1194 668h1v1h-1zM1206 668h1v1h-1zM1219 668h1v1h-1zM1232 668h1v1h-1zM1244 668h1v1h-1zM1257 668h1v1h-1zM1270 668h1v1h-1zM1283 668h1v1h-1zM1295 668h1v1h-1zM1308 668h1v1h-1zM1321 668h1v1h-1zM1333 668h1v1h-1zM1346 668h1v1h-1zM1359 668h1v1h-1zM1371 668h1v1h-1zM1384 668h1v1h-1zM1397 668h1v1h-1zM1410 668h1v1h-1zM1422 668h1v1h-1zM1435 668h1v1h-1zM1448 668h1v1h-1zM1460 668h1v1h-1zM1473 668h1v1h-1zM1486 668h1v1h-1zM1499 668h1v1h-1zM1511 668h1v1h-1zM1524 668h1v1h-1zM1537 668h1v1h-1zM1549 668h1v1h-1zM1562 668h1v1h-1zM1575 668h1v1h-1zM1588 668h1v1h-1zM1600 668h1v1h-1zM1613 668h1v1h-1zM1626 668h1v1h-1zM1638 668h1v1h-1zM1651 668h1v1h-1zM1664 668h1v1h-1zM11 681h1v1h-1zM24 681h1v1h-1zM37 681h1v1h-1zM50 681h1v1h-1zM62 681h1v1h-1zM75 681h1v1h-1zM88 681h1v1h-1zM100 681h1v1h-1zM113 681h1v1h-1zM126 681h1v1h-1zM139 681h1v1h-1zM151 681h1v1h-1zM164 681h1v1h-1zM177 681h1v1h-1zM189 681h1v1h-1zM202 681h1v1h-1zM215 681h1v1h-1zM227 681h1v1h-1zM240 681h1v1h-1zM253 681h1v1h-1zM266 681h1v1h-1zM278 681h1v1h-1zM291 681h1v1h-1zM304 681h1v1h-1zM316 681h1v1h-1zM329 681h1v1h-1zM342 681h1v1h-1zM355 681h1v1h-1zM367 681h1v1h-1zM380 681h1v1h-1zM393 681h1v1h-1zM405 681h1v1h-1zM418 681h1v1h-1zM431 681h1v1h-1zM444 681h1v1h-1zM456 681h1v1h-1zM469 681h1v1h-1zM482 681h1v1h-1zM494 681h1v1h-1zM507 681h1v1h-1zM520 681h1v1h-1zM533 681h1v1h-1zM545 681h1v1h-1zM558 681h1v1h-1zM571 681h1v1h-1zM583 681h1v1h-1zM596 681h1v1h-1zM609 681h1v1h-1zM622 681h1v1h-1zM634 681h1v1h-1zM647 681h1v1h-1zM660 681h1v1h-1zM672 681h1v1h-1zM685 681h1v1h-1zM698 681h1v1h-1zM711 681h1v1h-1zM723 681h1v1h-1zM736 681h1v1h-1zM749 681h1v1h-1zM761 681h1v1h-1zM774 681h1v1h-1zM787 681h1v1h-1zM799 681h1v1h-1zM812 681h1v1h-1zM825 681h1v1h-1zM838 681h1v1h-1zM850 681h1v1h-1zM863 681h1v1h-1zM876 681h1v1h-1zM888 681h1v1h-1zM901 681h1v1h-1zM914 681h1v1h-1zM927 681h1v1h-1zM939 681h1v1h-1zM952 681h1v1h-1zM965 681h1v1h-1zM977 681h1v1h-1zM990 681h1v1h-1zM1003 681h1v1h-1zM1016 681h1v1h-1zM1028 681h1v1h-1zM1041 681h1v1h-1zM1054 681h1v1h-1zM1066 681h1v1h-1zM1079 681h1v1h-1zM1092 681h1v1h-1zM1105 681h1v1h-1zM1117 681h1v1h-1zM1130 681h1v1h-1zM1143 681h1v1h-1zM1155 681h1v1h-1zM1168 681h1v1h-1zM1181 681h1v1h-1zM1194 681h1v1h-1zM1206 681h1v1h-1zM1219 681h1v1h-1zM1232 681h1v1h-1zM1244 681h1v1h-1zM1257 681h1v1h-1zM1270 681h1v1h-1zM1283 681h1v1h-1zM1295 681h1v1h-1zM1308 681h1v1h-1zM1321 681h1v1h-1zM1333 681h1v1h-1zM1346 681h1v1h-1zM1359 681h1v1h-1zM1371 681h1v1h-1zM1384 681h1v1h-1zM1397 681h1v1h-1zM1410 681h1v1h-1zM1422 681h1v1h-1zM1435 681h1v1h-1zM1448 681h1v1h-1zM1460 681h1v1h-1zM1473 681h1v1h-1zM1486 681h1v1h-1zM1499 681h1v1h-1zM1511 681h1v1h-1zM1524 681h1v1h-1zM1537 681h1v1h-1zM1549 681h1v1h-1zM1562 681h1v1h-1zM1575 681h1v1h-1zM1588 681h1v1h-1zM1600 681h1v1h-1zM1613 681h1v1h-1zM1626 681h1v1h-1zM1638 681h1v1h-1zM1651 681h1v1h-1zM1664 681h1v1h-1zM11 694h1v1h-1zM24 694h1v1h-1zM37 694h1v1h-1zM50 694h1v1h-1zM62 694h1v1h-1zM75 694h1v1h-1zM88 694h1v1h-1zM100 694h1v1h-1zM113 694h1v1h-1zM126 694h1v1h-1zM139 694h1v1h-1zM151 694h1v1h-1zM164 694h1v1h-1zM177 694h1v1h-1zM189 694h1v1h-1zM202 694h1v1h-1zM215 694h1v1h-1zM227 694h1v1h-1zM240 694h1v1h-1zM253 694h1v1h-1zM266 694h1v1h-1zM278 694h1v1h-1zM291 694h1v1h-1zM304 694h1v1h-1zM316 694h1v1h-1zM329 694h1v1h-1zM342 694h1v1h-1zM355 694h1v1h-1zM367 694h1v1h-1zM380 694h1v1h-1zM393 694h1v1h-1zM405 694h1v1h-1zM418 694h1v1h-1zM431 694h1v1h-1zM444 694h1v1h-1zM456 694h1v1h-1zM469 694h1v1h-1zM482 694h1v1h-1zM494 694h1v1h-1zM507 694h1v1h-1zM520 694h1v1h-1zM533 694h1v1h-1zM545 694h1v1h-1zM558 694h1v1h-1zM571 694h1v1h-1zM583 694h1v1h-1zM596 694h1v1h-1zM609 694h1v1h-1zM622 694h1v1h-1zM634 694h1v1h-1zM647 694h1v1h-1zM660 694h1v1h-1zM672 694h1v1h-1zM685 694h1v1h-1zM698 694h1v1h-1zM711 694h1v1h-1zM723 694h1v1h-1zM736 694h1v1h-1zM749 694h1v1h-1zM761 694h1v1h-1zM774 694h1v1h-1zM787 694h1v1h-1zM799 694h1v1h-1zM812 694h1v1h-1zM825 694h1v1h-1zM838 694h1v1h-1zM850 694h1v1h-1zM863 694h1v1h-1zM876 694h1v1h-1zM888 694h1v1h-1zM901 694h1v1h-1zM914 694h1v1h-1zM927 694h1v1h-1zM939 694h1v1h-1zM952 694h1v1h-1zM965 694h1v1h-1zM977 694h1v1h-1zM990 694h1v1h-1zM1003 694h1v1h-1zM1016 694h1v1h-1zM1028 694h1v1h-1zM1041 694h1v1h-1zM1054 694h1v1h-1zM1066 694h1v1h-1zM1079 694h1v1h-1zM1092 694h1v1h-1zM1105 694h1v1h-1zM1117 694h1v1h-1zM1130 694h1v1h-1zM1143 694h1v1h-1zM1155 694h1v1h-1zM1168 694h1v1h-1zM1181 694h1v1h-1zM1194 694h1v1h-1zM1206 694h1v1h-1zM1219 694h1v1h-1zM1232 694h1v1h-1zM1244 694h1v1h-1zM1257 694h1v1h-1zM1270 694h1v1h-1zM1283 694h1v1h-1zM1295 694h1v1h-1zM1308 694h1v1h-1zM1321 694h1v1h-1zM1333 694h1v1h-1zM1346 694h1v1h-1zM1359 694h1v1h-1zM1371 694h1v1h-1zM1384 694h1v1h-1zM1397 694h1v1h-1zM1410 694h1v1h-1zM1422 694h1v1h-1zM1435 694h1v1h-1zM1448 694h1v1h-1zM1460 694h1v1h-1zM1473 694h1v1h-1zM1486 694h1v1h-1zM1499 694h1v1h-1zM1511 694h1v1h-1zM1524 694h1v1h-1zM1537 694h1v1h-1zM1549 694h1v1h-1zM1562 694h1v1h-1zM1575 694h1v1h-1zM1588 694h1v1h-1zM1600 694h1v1h-1zM1613 694h1v1h-1zM1626 694h1v1h-1zM1638 694h1v1h-1zM1651 694h1v1h-1zM1664 694h1v1h-1zM11 706h1v1h-1zM24 706h1v1h-1zM37 706h1v1h-1zM50 706h1v1h-1zM62 706h1v1h-1zM75 706h1v1h-1zM88 706h1v1h-1zM100 706h1v1h-1zM113 706h1v1h-1zM126 706h1v1h-1zM139 706h1v1h-1zM151 706h1v1h-1zM164 706h1v1h-1zM177 706h1v1h-1zM189 706h1v1h-1zM202 706h1v1h-1zM215 706h1v1h-1zM227 706h1v1h-1zM240 706h1v1h-1zM253 706h1v1h-1zM266 706h1v1h-1zM278 706h1v1h-1zM291 706h1v1h-1zM304 706h1v1h-1zM316 706h1v1h-1zM329 706h1v1h-1zM342 706h1v1h-1zM355 706h1v1h-1zM367 706h1v1h-1zM380 706h1v1h-1zM393 706h1v1h-1zM405 706h1v1h-1zM418 706h1v1h-1zM431 706h1v1h-1zM444 706h1v1h-1zM456 706h1v1h-1zM469 706h1v1h-1zM482 706h1v1h-1zM494 706h1v1h-1zM507 706h1v1h-1zM520 706h1v1h-1zM533 706h1v1h-1zM545 706h1v1h-1zM558 706h1v1h-1zM571 706h1v1h-1zM583 706h1v1h-1zM596 706h1v1h-1zM609 706h1v1h-1zM622 706h1v1h-1zM634 706h1v1h-1zM647 706h1v1h-1zM660 706h1v1h-1zM672 706h1v1h-1zM685 706h1v1h-1zM698 706h1v1h-1zM711 706h1v1h-1zM723 706h1v1h-1zM736 706h1v1h-1zM749 706h1v1h-1zM761 706h1v1h-1zM774 706h1v1h-1zM787 706h1v1h-1zM799 706h1v1h-1zM812 706h1v1h-1zM825 706h1v1h-1zM838 706h1v1h-1zM850 706h1v1h-1zM863 706h1v1h-1zM876 706h1v1h-1zM888 706h1v1h-1zM901 706h1v1h-1zM914 706h1v1h-1zM927 706h1v1h-1zM939 706h1v1h-1zM952 706h1v1h-1zM965 706h1v1h-1zM977 706h1v1h-1zM990 706h1v1h-1zM1003 706h1v1h-1zM1016 706h1v1h-1zM1028 706h1v1h-1zM1041 706h1v1h-1zM1054 706h1v1h-1zM1066 706h1v1h-1zM1079 706h1v1h-1zM1092 706h1v1h-1zM1105 706h1v1h-1zM1117 706h1v1h-1zM1130 706h1v1h-1zM1143 706h1v1h-1zM1155 706h1v1h-1zM1168 706h1v1h-1zM1181 706h1v1h-1zM1194 706h1v1h-1zM1206 706h1v1h-1zM1219 706h1v1h-1zM1232 706h1v1h-1zM1244 706h1v1h-1zM1257 706h1v1h-1zM1270 706h1v1h-1zM1283 706h1v1h-1zM1295 706h1v1h-1zM1308 706h1v1h-1zM1321 706h1v1h-1zM1333 706h1v1h-1zM1346 706h1v1h-1zM1359 706h1v1h-1zM1371 706h1v1h-1zM1384 706h1v1h-1zM1397 706h1v1h-1zM1410 706h1v1h-1zM1422 706h1v1h-1zM1435 706h1v1h-1zM1448 706h1v1h-1zM1460 706h1v1h-1zM1473 706h1v1h-1zM1486 706h1v1h-1zM1499 706h1v1h-1zM1511 706h1v1h-1zM1524 706h1v1h-1zM1537 706h1v1h-1zM1549 706h1v1h-1zM1562 706h1v1h-1zM1575 706h1v1h-1zM1588 706h1v1h-1zM1600 706h1v1h-1zM1613 706h1v1h-1zM1626 706h1v1h-1zM1638 706h1v1h-1zM1651 706h1v1h-1zM1664 706h1v1h-1zM11 719h1v1h-1zM24 719h1v1h-1zM37 719h1v1h-1zM50 719h1v1h-1zM62 719h1v1h-1zM75 719h1v1h-1zM88 719h1v1h-1zM100 719h1v1h-1zM113 719h1v1h-1zM126 719h1v1h-1zM139 719h1v1h-1zM151 719h1v1h-1zM164 719h1v1h-1zM177 719h1v1h-1zM189 719h1v1h-1zM202 719h1v1h-1zM215 719h1v1h-1zM227 719h1v1h-1zM240 719h1v1h-1zM253 719h1v1h-1zM266 719h1v1h-1zM278 719h1v1h-1zM291 719h1v1h-1zM304 719h1v1h-1zM316 719h1v1h-1zM329 719h1v1h-1zM342 719h1v1h-1zM355 719h1v1h-1zM367 719h1v1h-1zM380 719h1v1h-1zM393 719h1v1h-1zM405 719h1v1h-1zM418 719h1v1h-1zM431 719h1v1h-1zM444 719h1v1h-1zM456 719h1v1h-1zM469 719h1v1h-1zM482 719h1v1h-1zM494 719h1v1h-1zM507 719h1v1h-1zM520 719h1v1h-1zM533 719h1v1h-1zM545 719h1v1h-1zM558 719h1v1h-1zM571 719h1v1h-1zM583 719h1v1h-1zM596 719h1v1h-1zM609 719h1v1h-1zM622 719h1v1h-1zM634 719h1v1h-1zM647 719h1v1h-1zM660 719h1v1h-1zM672 719h1v1h-1zM685 719h1v1h-1zM698 719h1v1h-1zM711 719h1v1h-1zM723 719h1v1h-1zM736 719h1v1h-1zM749 719h1v1h-1zM761 719h1v1h-1zM774 719h1v1h-1zM787 719h1v1h-1zM799 719h1v1h-1zM812 719h1v1h-1zM825 719h1v1h-1zM838 719h1v1h-1zM850 719h1v1h-1zM863 719h1v1h-1zM876 719h1v1h-1zM888 719h1v1h-1zM901 719h1v1h-1zM914 719h1v1h-1zM927 719h1v1h-1zM939 719h1v1h-1zM952 719h1v1h-1zM965 719h1v1h-1zM977 719h1v1h-1zM990 719h1v1h-1zM1003 719h1v1h-1zM1016 719h1v1h-1zM1028 719h1v1h-1zM1041 719h1v1h-1zM1054 719h1v1h-1zM1066 719h1v1h-1zM1079 719h1v1h-1zM1092 719h1v1h-1zM1105 719h1v1h-1zM1117 719h1v1h-1zM1130 719h1v1h-1zM1143 719h1v1h-1zM1155 719h1v1h-1zM1168 719h1v1h-1zM1181 719h1v1h-1zM1194 719h1v1h-1zM1206 719h1v1h-1zM1219 719h1v1h-1zM1232 719h1v1h-1zM1244 719h1v1h-1zM1257 719h1v1h-1zM1270 719h1v1h-1zM1283 719h1v1h-1zM1295 719h1v1h-1zM1308 719h1v1h-1zM1321 719h1v1h-1zM1333 719h1v1h-1zM1346 719h1v1h-1zM1359 719h1v1h-1zM1371 719h1v1h-1zM1384 719h1v1h-1zM1397 719h1v1h-1zM1410 719h1v1h-1zM1422 719h1v1h-1zM1435 719h1v1h-1zM1448 719h1v1h-1zM1460 719h1v1h-1zM1473 719h1v1h-1zM1486 719h1v1h-1zM1499 719h1v1h-1zM1511 719h1v1h-1zM1524 719h1v1h-1zM1537 719h1v1h-1zM1549 719h1v1h-1zM1562 719h1v1h-1zM1575 719h1v1h-1zM1588 719h1v1h-1zM1600 719h1v1h-1zM1613 719h1v1h-1zM1626 719h1v1h-1zM1638 719h1v1h-1zM1651 719h1v1h-1zM1664 719h1v1h-1zM11 732h1v1h-1zM24 732h1v1h-1zM37 732h1v1h-1zM50 732h1v1h-1zM62 732h1v1h-1zM75 732h1v1h-1zM88 732h1v1h-1zM100 732h1v1h-1zM113 732h1v1h-1zM126 732h1v1h-1zM139 732h1v1h-1zM151 732h1v1h-1zM164 732h1v1h-1zM177 732h1v1h-1zM189 732h1v1h-1zM202 732h1v1h-1zM215 732h1v1h-1zM227 732h1v1h-1zM240 732h1v1h-1zM253 732h1v1h-1zM266 732h1v1h-1zM278 732h1v1h-1zM291 732h1v1h-1zM304 732h1v1h-1zM316 732h1v1h-1zM329 732h1v1h-1zM342 732h1v1h-1zM355 732h1v1h-1zM367 732h1v1h-1zM380 732h1v1h-1zM393 732h1v1h-1zM405 732h1v1h-1zM418 732h1v1h-1zM431 732h1v1h-1zM444 732h1v1h-1zM456 732h1v1h-1zM469 732h1v1h-1zM482 732h1v1h-1zM494 732h1v1h-1zM507 732h1v1h-1zM520 732h1v1h-1zM533 732h1v1h-1zM545 732h1v1h-1zM558 732h1v1h-1zM571 732h1v1h-1zM583 732h1v1h-1zM596 732h1v1h-1zM609 732h1v1h-1zM622 732h1v1h-1zM634 732h1v1h-1zM647 732h1v1h-1zM660 732h1v1h-1zM672 732h1v1h-1zM685 732h1v1h-1zM698 732h1v1h-1zM711 732h1v1h-1zM723 732h1v1h-1zM736 732h1v1h-1zM749 732h1v1h-1zM761 732h1v1h-1zM774 732h1v1h-1zM787 732h1v1h-1zM799 732h1v1h-1zM812 732h1v1h-1zM825 732h1v1h-1zM838 732h1v1h-1zM850 732h1v1h-1zM863 732h1v1h-1zM876 732h1v1h-1zM888 732h1v1h-1zM901 732h1v1h-1zM914 732h1v1h-1zM927 732h1v1h-1zM939 732h1v1h-1zM952 732h1v1h-1zM965 732h1v1h-1zM977 732h1v1h-1zM990 732h1v1h-1zM1003 732h1v1h-1zM1016 732h1v1h-1zM1028 732h1v1h-1zM1041 732h1v1h-1zM1054 732h1v1h-1zM1066 732h1v1h-1zM1079 732h1v1h-1zM1092 732h1v1h-1zM1105 732h1v1h-1zM1117 732h1v1h-1zM1130 732h1v1h-1zM1143 732h1v1h-1zM1155 732h1v1h-1zM1168 732h1v1h-1zM1181 732h1v1h-1zM1194 732h1v1h-1zM1206 732h1v1h-1zM1219 732h1v1h-1zM1232 732h1v1h-1zM1244 732h1v1h-1zM1257 732h1v1h-1zM1270 732h1v1h-1zM1283 732h1v1h-1zM1295 732h1v1h-1zM1308 732h1v1h-1zM1321 732h1v1h-1zM1333 732h1v1h-1zM1346 732h1v1h-1zM1359 732h1v1h-1zM1371 732h1v1h-1zM1384 732h1v1h-1zM1397 732h1v1h-1zM1410 732h1v1h-1zM1422 732h1v1h-1zM1435 732h1v1h-1zM1448 732h1v1h-1zM1460 732h1v1h-1zM1473 732h1v1h-1zM1486 732h1v1h-1zM1499 732h1v1h-1zM1511 732h1v1h-1zM1524 732h1v1h-1zM1537 732h1v1h-1zM1549 732h1v1h-1zM1562 732h1v1h-1zM1575 732h1v1h-1zM1588 732h1v1h-1zM1600 732h1v1h-1zM1613 732h1v1h-1zM1626 732h1v1h-1zM1638 732h1v1h-1zM1651 732h1v1h-1zM1664 732h1v1h-1zM11 745h1v1h-1zM24 745h1v1h-1zM37 745h1v1h-1zM50 745h1v1h-1zM62 745h1v1h-1zM75 745h1v1h-1zM88 745h1v1h-1zM100 745h1v1h-1zM113 745h1v1h-1zM126 745h1v1h-1zM139 745h1v1h-1zM151 745h1v1h-1zM164 745h1v1h-1zM177 745h1v1h-1zM189 745h1v1h-1zM202 745h1v1h-1zM215 745h1v1h-1zM227 745h1v1h-1zM240 745h1v1h-1zM253 745h1v1h-1zM266 745h1v1h-1zM278 745h1v1h-1zM291 745h1v1h-1zM304 745h1v1h-1zM316 745h1v1h-1zM329 745h1v1h-1zM342 745h1v1h-1zM355 745h1v1h-1zM367 745h1v1h-1zM380 745h1v1h-1zM393 745h1v1h-1zM405 745h1v1h-1zM418 745h1v1h-1zM431 745h1v1h-1zM444 745h1v1h-1zM456 745h1v1h-1zM469 745h1v1h-1zM482 745h1v1h-1zM494 745h1v1h-1zM507 745h1v1h-1zM520 745h1v1h-1zM533 745h1v1h-1zM545 745h1v1h-1zM558 745h1v1h-1zM571 745h1v1h-1zM583 745h1v1h-1zM596 745h1v1h-1zM609 745h1v1h-1zM622 745h1v1h-1zM634 745h1v1h-1zM647 745h1v1h-1zM660 745h1v1h-1zM672 745h1v1h-1zM685 745h1v1h-1zM698 745h1v1h-1zM711 745h1v1h-1zM723 745h1v1h-1zM736 745h1v1h-1zM749 745h1v1h-1zM761 745h1v1h-1zM774 745h1v1h-1zM787 745h1v1h-1zM799 745h1v1h-1zM812 745h1v1h-1zM825 745h1v1h-1zM838 745h1v1h-1zM850 745h1v1h-1zM863 745h1v1h-1zM876 745h1v1h-1zM888 745h1v1h-1zM901 745h1v1h-1zM914 745h1v1h-1zM927 745h1v1h-1zM939 745h1v1h-1zM952 745h1v1h-1zM965 745h1v1h-1zM977 745h1v1h-1zM990 745h1v1h-1zM1003 745h1v1h-1zM1016 745h1v1h-1zM1028 745h1v1h-1zM1041 745h1v1h-1zM1054 745h1v1h-1zM1066 745h1v1h-1zM1079 745h1v1h-1zM1092 745h1v1h-1zM1105 745h1v1h-1zM1117 745h1v1h-1zM1130 745h1v1h-1zM1143 745h1v1h-1zM1155 745h1v1h-1zM1168 745h1v1h-1zM1181 745h1v1h-1zM1194 745h1v1h-1zM1206 745h1v1h-1zM1219 745h1v1h-1zM1232 745h1v1h-1zM1244 745h1v1h-1zM1257 745h1v1h-1zM1270 745h1v1h-1zM1283 745h1v1h-1zM1295 745h1v1h-1zM1308 745h1v1h-1zM1321 745h1v1h-1zM1333 745h1v1h-1zM1346 745h1v1h-1zM1359 745h1v1h-1zM1371 745h1v1h-1zM1384 745h1v1h-1zM1397 745h1v1h-1zM1410 745h1v1h-1zM1422 745h1v1h-1zM1435 745h1v1h-1zM1448 745h1v1h-1zM1460 745h1v1h-1zM1473 745h1v1h-1zM1486 745h1v1h-1zM1499 745h1v1h-1zM1511 745h1v1h-1zM1524 745h1v1h-1zM1537 745h1v1h-1zM1549 745h1v1h-1zM1562 745h1v1h-1zM1575 745h1v1h-1zM1588 745h1v1h-1zM1600 745h1v1h-1zM1613 745h1v1h-1zM1626 745h1v1h-1zM1638 745h1v1h-1zM1651 745h1v1h-1zM1664 745h1v1h-1zM11 757h1v1h-1zM24 757h1v1h-1zM37 757h1v1h-1zM50 757h1v1h-1zM62 757h1v1h-1zM75 757h1v1h-1zM88 757h1v1h-1zM100 757h1v1h-1zM113 757h1v1h-1zM126 757h1v1h-1zM139 757h1v1h-1zM151 757h1v1h-1zM164 757h1v1h-1zM177 757h1v1h-1zM189 757h1v1h-1zM202 757h1v1h-1zM215 757h1v1h-1zM227 757h1v1h-1zM240 757h1v1h-1zM253 757h1v1h-1zM266 757h1v1h-1zM278 757h1v1h-1zM291 757h1v1h-1zM304 757h1v1h-1zM316 757h1v1h-1zM329 757h1v1h-1zM342 757h1v1h-1zM355 757h1v1h-1zM367 757h1v1h-1zM380 757h1v1h-1zM393 757h1v1h-1zM405 757h1v1h-1zM418 757h1v1h-1zM431 757h1v1h-1zM444 757h1v1h-1zM456 757h1v1h-1zM469 757h1v1h-1zM482 757h1v1h-1zM494 757h1v1h-1zM507 757h1v1h-1zM520 757h1v1h-1zM533 757h1v1h-1zM545 757h1v1h-1zM558 757h1v1h-1zM571 757h1v1h-1zM583 757h1v1h-1zM596 757h1v1h-1zM609 757h1v1h-1zM622 757h1v1h-1zM634 757h1v1h-1zM647 757h1v1h-1zM660 757h1v1h-1zM672 757h1v1h-1zM685 757h1v1h-1zM698 757h1v1h-1zM711 757h1v1h-1zM723 757h1v1h-1zM736 757h1v1h-1zM749 757h1v1h-1zM761 757h1v1h-1zM774 757h1v1h-1zM787 757h1v1h-1zM799 757h1v1h-1zM812 757h1v1h-1zM825 757h1v1h-1zM838 757h1v1h-1zM850 757h1v1h-1zM863 757h1v1h-1zM876 757h1v1h-1zM888 757h1v1h-1zM901 757h1v1h-1zM914 757h1v1h-1zM927 757h1v1h-1zM939 757h1v1h-1zM952 757h1v1h-1zM965 757h1v1h-1zM977 757h1v1h-1zM990 757h1v1h-1zM1003 757h1v1h-1zM1016 757h1v1h-1zM1028 757h1v1h-1zM1041 757h1v1h-1zM1054 757h1v1h-1zM1066 757h1v1h-1zM1079 757h1v1h-1zM1092 757h1v1h-1zM1105 757h1v1h-1zM1117 757h1v1h-1zM1130 757h1v1h-1zM1143 757h1v1h-1zM1155 757h1v1h-1zM1168 757h1v1h-1zM1181 757h1v1h-1zM1194 757h1v1h-1zM1206 757h1v1h-1zM1219 757h1v1h-1zM1232 757h1v1h-1zM1244 757h1v1h-1zM1257 757h1v1h-1zM1270 757h1v1h-1zM1283 757h1v1h-1zM1295 757h1v1h-1zM1308 757h1v1h-1zM1321 757h1v1h-1zM1333 757h1v1h-1zM1346 757h1v1h-1zM1359 757h1v1h-1zM1371 757h1v1h-1zM1384 757h1v1h-1zM1397 757h1v1h-1zM1410 757h1v1h-1zM1422 757h1v1h-1zM1435 757h1v1h-1zM1448 757h1v1h-1zM1460 757h1v1h-1zM1473 757h1v1h-1zM1486 757h1v1h-1zM1499 757h1v1h-1zM1511 757h1v1h-1zM1524 757h1v1h-1zM1537 757h1v1h-1zM1549 757h1v1h-1zM1562 757h1v1h-1zM1575 757h1v1h-1zM1588 757h1v1h-1zM1600 757h1v1h-1zM1613 757h1v1h-1zM1626 757h1v1h-1zM1638 757h1v1h-1zM1651 757h1v1h-1zM1664 757h1v1h-1zM11 770h1v1h-1zM24 770h1v1h-1zM37 770h1v1h-1zM50 770h1v1h-1zM62 770h1v1h-1zM75 770h1v1h-1zM88 770h1v1h-1zM100 770h1v1h-1zM113 770h1v1h-1zM126 770h1v1h-1zM139 770h1v1h-1zM151 770h1v1h-1zM164 770h1v1h-1zM177 770h1v1h-1zM189 770h1v1h-1zM202 770h1v1h-1zM215 770h1v1h-1zM227 770h1v1h-1zM240 770h1v1h-1zM253 770h1v1h-1zM266 770h1v1h-1zM278 770h1v1h-1zM291 770h1v1h-1zM304 770h1v1h-1zM316 770h1v1h-1zM329 770h1v1h-1zM342 770h1v1h-1zM355 770h1v1h-1zM367 770h1v1h-1zM380 770h1v1h-1zM393 770h1v1h-1zM405 770h1v1h-1zM418 770h1v1h-1zM431 770h1v1h-1zM444 770h1v1h-1zM456 770h1v1h-1zM469 770h1v1h-1zM482 770h1v1h-1zM494 770h1v1h-1zM507 770h1v1h-1zM520 770h1v1h-1zM533 770h1v1h-1zM545 770h1v1h-1zM558 770h1v1h-1zM571 770h1v1h-1zM583 770h1v1h-1zM596 770h1v1h-1zM609 770h1v1h-1zM622 770h1v1h-1zM634 770h1v1h-1zM647 770h1v1h-1zM660 770h1v1h-1zM672 770h1v1h-1zM685 770h1v1h-1zM698 770h1v1h-1zM711 770h1v1h-1zM723 770h1v1h-1zM736 770h1v1h-1zM749 770h1v1h-1zM761 770h1v1h-1zM774 770h1v1h-1zM787 770h1v1h-1zM799 770h1v1h-1zM812 770h1v1h-1zM825 770h1v1h-1zM838 770h1v1h-1zM850 770h1v1h-1zM863 770h1v1h-1zM876 770h1v1h-1zM888 770h1v1h-1zM901 770h1v1h-1zM914 770h1v1h-1zM927 770h1v1h-1zM939 770h1v1h-1zM952 770h1v1h-1zM965 770h1v1h-1zM977 770h1v1h-1zM990 770h1v1h-1zM1003 770h1v1h-1zM1016 770h1v1h-1zM1028 770h1v1h-1zM1041 770h1v1h-1zM1054 770h1v1h-1zM1066 770h1v1h-1zM1079 770h1v1h-1zM1092 770h1v1h-1zM1105 770h1v1h-1zM1117 770h1v1h-1zM1130 770h1v1h-1zM1143 770h1v1h-1zM1155 770h1v1h-1zM1168 770h1v1h-1zM1181 770h1v1h-1zM1194 770h1v1h-1zM1206 770h1v1h-1zM1219 770h1v1h-1zM1232 770h1v1h-1zM1244 770h1v1h-1zM1257 770h1v1h-1zM1270 770h1v1h-1zM1283 770h1v1h-1zM1295 770h1v1h-1zM1308 770h1v1h-1zM1321 770h1v1h-1zM1333 770h1v1h-1zM1346 770h1v1h-1zM1359 770h1v1h-1zM1371 770h1v1h-1zM1384 770h1v1h-1zM1397 770h1v1h-1zM1410 770h1v1h-1zM1422 770h1v1h-1zM1435 770h1v1h-1zM1448 770h1v1h-1zM1460 770h1v1h-1zM1473 770h1v1h-1zM1486 770h1v1h-1zM1499 770h1v1h-1zM1511 770h1v1h-1zM1524 770h1v1h-1zM1537 770h1v1h-1zM1549 770h1v1h-1zM1562 770h1v1h-1zM1575 770h1v1h-1zM1588 770h1v1h-1zM1600 770h1v1h-1zM1613 770h1v1h-1zM1626 770h1v1h-1zM1638 770h1v1h-1zM1651 770h1v1h-1zM1664 770h1v1h-1zM11 783h1v1h-1zM24 783h1v1h-1zM37 783h1v1h-1zM50 783h1v1h-1zM62 783h1v1h-1zM75 783h1v1h-1zM88 783h1v1h-1zM100 783h1v1h-1zM113 783h1v1h-1zM126 783h1v1h-1zM139 783h1v1h-1zM151 783h1v1h-1zM164 783h1v1h-1zM177 783h1v1h-1zM189 783h1v1h-1zM202 783h1v1h-1zM215 783h1v1h-1zM227 783h1v1h-1zM240 783h1v1h-1zM253 783h1v1h-1zM266 783h1v1h-1zM278 783h1v1h-1zM291 783h1v1h-1zM304 783h1v1h-1zM316 783h1v1h-1zM329 783h1v1h-1zM342 783h1v1h-1zM355 783h1v1h-1zM367 783h1v1h-1zM380 783h1v1h-1zM393 783h1v1h-1zM405 783h1v1h-1zM418 783h1v1h-1zM431 783h1v1h-1zM444 783h1v1h-1zM456 783h1v1h-1zM469 783h1v1h-1zM482 783h1v1h-1zM494 783h1v1h-1zM507 783h1v1h-1zM520 783h1v1h-1zM533 783h1v1h-1zM545 783h1v1h-1zM558 783h1v1h-1zM571 783h1v1h-1zM583 783h1v1h-1zM596 783h1v1h-1zM609 783h1v1h-1zM622 783h1v1h-1zM634 783h1v1h-1zM647 783h1v1h-1zM660 783h1v1h-1zM672 783h1v1h-1zM685 783h1v1h-1zM698 783h1v1h-1zM711 783h1v1h-1zM723 783h1v1h-1zM736 783h1v1h-1zM749 783h1v1h-1zM761 783h1v1h-1zM774 783h1v1h-1zM787 783h1v1h-1zM799 783h1v1h-1zM812 783h1v1h-1zM825 783h1v1h-1zM838 783h1v1h-1zM850 783h1v1h-1zM863 783h1v1h-1zM876 783h1v1h-1zM888 783h1v1h-1zM901 783h1v1h-1zM914 783h1v1h-1zM927 783h1v1h-1zM939 783h1v1h-1zM952 783h1v1h-1zM965 783h1v1h-1zM977 783h1v1h-1zM990 783h1v1h-1zM1003 783h1v1h-1zM1016 783h1v1h-1zM1028 783h1v1h-1zM1041 783h1v1h-1zM1054 783h1v1h-1zM1066 783h1v1h-1zM1079 783h1v1h-1zM1092 783h1v1h-1zM1105 783h1v1h-1zM1117 783h1v1h-1zM1130 783h1v1h-1zM1143 783h1v1h-1zM1155 783h1v1h-1zM1168 783h1v1h-1zM1181 783h1v1h-1zM1194 783h1v1h-1zM1206 783h1v1h-1zM1219 783h1v1h-1zM1232 783h1v1h-1zM1244 783h1v1h-1zM1257 783h1v1h-1zM1270 783h1v1h-1zM1283 783h1v1h-1zM1295 783h1v1h-1zM1308 783h1v1h-1zM1321 783h1v1h-1zM1333 783h1v1h-1zM1346 783h1v1h-1zM1359 783h1v1h-1zM1371 783h1v1h-1zM1384 783h1v1h-1zM1397 783h1v1h-1zM1410 783h1v1h-1zM1422 783h1v1h-1zM1435 783h1v1h-1zM1448 783h1v1h-1zM1460 783h1v1h-1zM1473 783h1v1h-1zM1486 783h1v1h-1zM1499 783h1v1h-1zM1511 783h1v1h-1zM1524 783h1v1h-1zM1537 783h1v1h-1zM1549 783h1v1h-1zM1562 783h1v1h-1zM1575 783h1v1h-1zM1588 783h1v1h-1zM1600 783h1v1h-1zM1613 783h1v1h-1zM1626 783h1v1h-1zM1638 783h1v1h-1zM1651 783h1v1h-1zM1664 783h1v1h-1zM11 795h1v1h-1zM24 795h1v1h-1zM37 795h1v1h-1zM50 795h1v1h-1zM62 795h1v1h-1zM75 795h1v1h-1zM88 795h1v1h-1zM100 795h1v1h-1zM113 795h1v1h-1zM126 795h1v1h-1zM139 795h1v1h-1zM151 795h1v1h-1zM164 795h1v1h-1zM177 795h1v1h-1zM189 795h1v1h-1zM202 795h1v1h-1zM215 795h1v1h-1zM227 795h1v1h-1zM240 795h1v1h-1zM253 795h1v1h-1zM266 795h1v1h-1zM278 795h1v1h-1zM291 795h1v1h-1zM304 795h1v1h-1zM316 795h1v1h-1zM329 795h1v1h-1zM342 795h1v1h-1zM355 795h1v1h-1zM367 795h1v1h-1zM380 795h1v1h-1zM393 795h1v1h-1zM405 795h1v1h-1zM418 795h1v1h-1zM431 795h1v1h-1zM444 795h1v1h-1zM456 795h1v1h-1zM469 795h1v1h-1zM482 795h1v1h-1zM494 795h1v1h-1zM507 795h1v1h-1zM520 795h1v1h-1zM533 795h1v1h-1zM545 795h1v1h-1zM558 795h1v1h-1zM571 795h1v1h-1zM583 795h1v1h-1zM596 795h1v1h-1zM609 795h1v1h-1zM622 795h1v1h-1zM634 795h1v1h-1zM647 795h1v1h-1zM660 795h1v1h-1zM672 795h1v1h-1zM685 795h1v1h-1zM698 795h1v1h-1zM711 795h1v1h-1zM723 795h1v1h-1zM736 795h1v1h-1zM749 795h1v1h-1zM761 795h1v1h-1zM774 795h1v1h-1zM787 795h1v1h-1zM799 795h1v1h-1zM812 795h1v1h-1zM825 795h1v1h-1zM838 795h1v1h-1zM850 795h1v1h-1zM863 795h1v1h-1zM876 795h1v1h-1zM888 795h1v1h-1zM901 795h1v1h-1zM914 795h1v1h-1zM927 795h1v1h-1zM939 795h1v1h-1zM952 795h1v1h-1zM965 795h1v1h-1zM977 795h1v1h-1zM990 795h1v1h-1zM1003 795h1v1h-1zM1016 795h1v1h-1zM1028 795h1v1h-1zM1041 795h1v1h-1zM1054 795h1v1h-1zM1066 795h1v1h-1zM1079 795h1v1h-1zM1092 795h1v1h-1zM1105 795h1v1h-1zM1117 795h1v1h-1zM1130 795h1v1h-1zM1143 795h1v1h-1zM1155 795h1v1h-1zM1168 795h1v1h-1zM1181 795h1v1h-1zM1194 795h1v1h-1zM1206 795h1v1h-1zM1219 795h1v1h-1zM1232 795h1v1h-1zM1244 795h1v1h-1zM1257 795h1v1h-1zM1270 795h1v1h-1zM1283 795h1v1h-1zM1295 795h1v1h-1zM1308 795h1v1h-1zM1321 795h1v1h-1zM1333 795h1v1h-1zM1346 795h1v1h-1zM1359 795h1v1h-1zM1371 795h1v1h-1zM1384 795h1v1h-1zM1397 795h1v1h-1zM1410 795h1v1h-1zM1422 795h1v1h-1zM1435 795h1v1h-1zM1448 795h1v1h-1zM1460 795h1v1h-1zM1473 795h1v1h-1zM1486 795h1v1h-1zM1499 795h1v1h-1zM1511 795h1v1h-1zM1524 795h1v1h-1zM1537 795h1v1h-1zM1549 795h1v1h-1zM1562 795h1v1h-1zM1575 795h1v1h-1zM1588 795h1v1h-1zM1600 795h1v1h-1zM1613 795h1v1h-1zM1626 795h1v1h-1zM1638 795h1v1h-1zM1651 795h1v1h-1zM1664 795h1v1h-1zM11 808h1v1h-1zM24 808h1v1h-1zM37 808h1v1h-1zM50 808h1v1h-1zM62 808h1v1h-1zM75 808h1v1h-1zM88 808h1v1h-1zM100 808h1v1h-1zM113 808h1v1h-1zM126 808h1v1h-1zM139 808h1v1h-1zM151 808h1v1h-1zM164 808h1v1h-1zM177 808h1v1h-1zM189 808h1v1h-1zM202 808h1v1h-1zM215 808h1v1h-1zM227 808h1v1h-1zM240 808h1v1h-1zM253 808h1v1h-1zM266 808h1v1h-1zM278 808h1v1h-1zM291 808h1v1h-1zM304 808h1v1h-1zM316 808h1v1h-1zM329 808h1v1h-1zM342 808h1v1h-1zM355 808h1v1h-1zM367 808h1v1h-1zM380 808h1v1h-1zM393 808h1v1h-1zM405 808h1v1h-1zM418 808h1v1h-1zM431 808h1v1h-1zM444 808h1v1h-1zM456 808h1v1h-1zM469 808h1v1h-1zM482 808h1v1h-1zM494 808h1v1h-1zM507 808h1v1h-1zM520 808h1v1h-1zM533 808h1v1h-1zM545 808h1v1h-1zM558 808h1v1h-1zM571 808h1v1h-1zM583 808h1v1h-1zM596 808h1v1h-1zM609 808h1v1h-1zM622 808h1v1h-1zM634 808h1v1h-1zM647 808h1v1h-1zM660 808h1v1h-1zM672 808h1v1h-1zM685 808h1v1h-1zM698 808h1v1h-1zM711 808h1v1h-1zM723 808h1v1h-1zM736 808h1v1h-1zM749 808h1v1h-1zM761 808h1v1h-1zM774 808h1v1h-1zM787 808h1v1h-1zM799 808h1v1h-1zM812 808h1v1h-1zM825 808h1v1h-1zM838 808h1v1h-1zM850 808h1v1h-1zM863 808h1v1h-1zM876 808h1v1h-1zM888 808h1v1h-1zM901 808h1v1h-1zM914 808h1v1h-1zM927 808h1v1h-1zM939 808h1v1h-1zM952 808h1v1h-1zM965 808h1v1h-1zM977 808h1v1h-1zM990 808h1v1h-1zM1003 808h1v1h-1zM1016 808h1v1h-1zM1028 808h1v1h-1zM1041 808h1v1h-1zM1054 808h1v1h-1zM1066 808h1v1h-1zM1079 808h1v1h-1zM1092 808h1v1h-1zM1105 808h1v1h-1zM1117 808h1v1h-1zM1130 808h1v1h-1zM1143 808h1v1h-1zM1155 808h1v1h-1zM1168 808h1v1h-1zM1181 808h1v1h-1zM1194 808h1v1h-1zM1206 808h1v1h-1zM1219 808h1v1h-1zM1232 808h1v1h-1zM1244 808h1v1h-1zM1257 808h1v1h-1zM1270 808h1v1h-1zM1283 808h1v1h-1zM1295 808h1v1h-1zM1308 808h1v1h-1zM1321 808h1v1h-1zM1333 808h1v1h-1zM1346 808h1v1h-1zM1359 808h1v1h-1zM1371 808h1v1h-1zM1384 808h1v1h-1zM1397 808h1v1h-1zM1410 808h1v1h-1zM1422 808h1v1h-1zM1435 808h1v1h-1zM1448 808h1v1h-1zM1460 808h1v1h-1zM1473 808h1v1h-1zM1486 808h1v1h-1zM1499 808h1v1h-1zM1511 808h1v1h-1zM1524 808h1v1h-1zM1537 808h1v1h-1zM1549 808h1v1h-1zM1562 808h1v1h-1zM1575 808h1v1h-1zM1588 808h1v1h-1zM1600 808h1v1h-1zM1613 808h1v1h-1zM1626 808h1v1h-1zM1638 808h1v1h-1zM1651 808h1v1h-1zM1664 808h1v1h-1zM11 821h1v1h-1zM24 821h1v1h-1zM37 821h1v1h-1zM50 821h1v1h-1zM62 821h1v1h-1zM75 821h1v1h-1zM88 821h1v1h-1zM100 821h1v1h-1zM113 821h1v1h-1zM126 821h1v1h-1zM139 821h1v1h-1zM151 821h1v1h-1zM164 821h1v1h-1zM177 821h1v1h-1zM189 821h1v1h-1zM202 821h1v1h-1zM215 821h1v1h-1zM227 821h1v1h-1zM240 821h1v1h-1zM253 821h1v1h-1zM266 821h1v1h-1zM278 821h1v1h-1zM291 821h1v1h-1zM304 821h1v1h-1zM316 821h1v1h-1zM329 821h1v1h-1zM342 821h1v1h-1zM355 821h1v1h-1zM367 821h1v1h-1zM380 821h1v1h-1zM393 821h1v1h-1zM405 821h1v1h-1zM418 821h1v1h-1zM431 821h1v1h-1zM444 821h1v1h-1zM456 821h1v1h-1zM469 821h1v1h-1zM482 821h1v1h-1zM494 821h1v1h-1zM507 821h1v1h-1zM520 821h1v1h-1zM533 821h1v1h-1zM545 821h1v1h-1zM558 821h1v1h-1zM571 821h1v1h-1zM583 821h1v1h-1zM596 821h1v1h-1zM609 821h1v1h-1zM622 821h1v1h-1zM634 821h1v1h-1zM647 821h1v1h-1zM660 821h1v1h-1zM672 821h1v1h-1zM685 821h1v1h-1zM698 821h1v1h-1zM711 821h1v1h-1zM723 821h1v1h-1zM736 821h1v1h-1zM749 821h1v1h-1zM761 821h1v1h-1zM774 821h1v1h-1zM787 821h1v1h-1zM799 821h1v1h-1zM812 821h1v1h-1zM825 821h1v1h-1zM838 821h1v1h-1zM850 821h1v1h-1zM863 821h1v1h-1zM876 821h1v1h-1zM888 821h1v1h-1zM901 821h1v1h-1zM914 821h1v1h-1zM927 821h1v1h-1zM939 821h1v1h-1zM952 821h1v1h-1zM965 821h1v1h-1zM977 821h1v1h-1zM990 821h1v1h-1zM1003 821h1v1h-1zM1016 821h1v1h-1zM1028 821h1v1h-1zM1041 821h1v1h-1zM1054 821h1v1h-1zM1066 821h1v1h-1zM1079 821h1v1h-1zM1092 821h1v1h-1zM1105 821h1v1h-1zM1117 821h1v1h-1zM1130 821h1v1h-1zM1143 821h1v1h-1zM1155 821h1v1h-1zM1168 821h1v1h-1zM1181 821h1v1h-1zM1194 821h1v1h-1zM1206 821h1v1h-1zM1219 821h1v1h-1zM1232 821h1v1h-1zM1244 821h1v1h-1zM1257 821h1v1h-1zM1270 821h1v1h-1zM1283 821h1v1h-1zM1295 821h1v1h-1zM1308 821h1v1h-1zM1321 821h1v1h-1zM1333 821h1v1h-1zM1346 821h1v1h-1zM1359 821h1v1h-1zM1371 821h1v1h-1zM1384 821h1v1h-1zM1397 821h1v1h-1zM1410 821h1v1h-1zM1422 821h1v1h-1zM1435 821h1v1h-1zM1448 821h1v1h-1zM1460 821h1v1h-1zM1473 821h1v1h-1zM1486 821h1v1h-1zM1499 821h1v1h-1zM1511 821h1v1h-1zM1524 821h1v1h-1zM1537 821h1v1h-1zM1549 821h1v1h-1zM1562 821h1v1h-1zM1575 821h1v1h-1zM1588 821h1v1h-1zM1600 821h1v1h-1zM1613 821h1v1h-1zM1626 821h1v1h-1zM1638 821h1v1h-1zM1651 821h1v1h-1zM1664 821h1v1h-1zM11 833h1v1h-1zM24 833h1v1h-1zM37 833h1v1h-1zM50 833h1v1h-1zM62 833h1v1h-1zM75 833h1v1h-1zM88 833h1v1h-1zM100 833h1v1h-1zM113 833h1v1h-1zM126 833h1v1h-1zM139 833h1v1h-1zM151 833h1v1h-1zM164 833h1v1h-1zM177 833h1v1h-1zM189 833h1v1h-1zM202 833h1v1h-1zM215 833h1v1h-1zM227 833h1v1h-1zM240 833h1v1h-1zM253 833h1v1h-1zM266 833h1v1h-1zM278 833h1v1h-1zM291 833h1v1h-1zM304 833h1v1h-1zM316 833h1v1h-1zM329 833h1v1h-1zM342 833h1v1h-1zM355 833h1v1h-1zM367 833h1v1h-1zM380 833h1v1h-1zM393 833h1v1h-1zM405 833h1v1h-1zM418 833h1v1h-1zM431 833h1v1h-1zM444 833h1v1h-1zM456 833h1v1h-1zM469 833h1v1h-1zM482 833h1v1h-1zM494 833h1v1h-1zM507 833h1v1h-1zM520 833h1v1h-1zM533 833h1v1h-1zM545 833h1v1h-1zM558 833h1v1h-1zM571 833h1v1h-1zM583 833h1v1h-1zM596 833h1v1h-1zM609 833h1v1h-1zM622 833h1v1h-1zM634 833h1v1h-1zM647 833h1v1h-1zM660 833h1v1h-1zM672 833h1v1h-1zM685 833h1v1h-1zM698 833h1v1h-1zM711 833h1v1h-1zM723 833h1v1h-1zM736 833h1v1h-1zM749 833h1v1h-1zM761 833h1v1h-1zM774 833h1v1h-1zM787 833h1v1h-1zM799 833h1v1h-1zM812 833h1v1h-1zM825 833h1v1h-1zM838 833h1v1h-1zM850 833h1v1h-1zM863 833h1v1h-1zM876 833h1v1h-1zM888 833h1v1h-1zM901 833h1v1h-1zM914 833h1v1h-1zM927 833h1v1h-1zM939 833h1v1h-1zM952 833h1v1h-1zM965 833h1v1h-1zM977 833h1v1h-1zM990 833h1v1h-1zM1003 833h1v1h-1zM1016 833h1v1h-1zM1028 833h1v1h-1zM1041 833h1v1h-1zM1054 833h1v1h-1zM1066 833h1v1h-1zM1079 833h1v1h-1zM1092 833h1v1h-1zM1105 833h1v1h-1zM1117 833h1v1h-1zM1130 833h1v1h-1zM1143 833h1v1h-1zM1155 833h1v1h-1zM1168 833h1v1h-1zM1181 833h1v1h-1zM1194 833h1v1h-1zM1206 833h1v1h-1zM1219 833h1v1h-1zM1232 833h1v1h-1zM1244 833h1v1h-1zM1257 833h1v1h-1zM1270 833h1v1h-1zM1283 833h1v1h-1zM1295 833h1v1h-1zM1308 833h1v1h-1zM1321 833h1v1h-1zM1333 833h1v1h-1zM1346 833h1v1h-1zM1359 833h1v1h-1zM1371 833h1v1h-1zM1384 833h1v1h-1zM1397 833h1v1h-1zM1410 833h1v1h-1zM1422 833h1v1h-1zM1435 833h1v1h-1zM1448 833h1v1h-1zM1460 833h1v1h-1zM1473 833h1v1h-1zM1486 833h1v1h-1zM1499 833h1v1h-1zM1511 833h1v1h-1zM1524 833h1v1h-1zM1537 833h1v1h-1zM1549 833h1v1h-1zM1562 833h1v1h-1zM1575 833h1v1h-1zM1588 833h1v1h-1zM1600 833h1v1h-1zM1613 833h1v1h-1zM1626 833h1v1h-1zM1638 833h1v1h-1zM1651 833h1v1h-1zM1664 833h1v1h-1zM11 846h1v1h-1zM24 846h1v1h-1zM37 846h1v1h-1zM50 846h1v1h-1zM62 846h1v1h-1zM75 846h1v1h-1zM88 846h1v1h-1zM100 846h1v1h-1zM113 846h1v1h-1zM126 846h1v1h-1zM139 846h1v1h-1zM151 846h1v1h-1zM164 846h1v1h-1zM177 846h1v1h-1zM189 846h1v1h-1zM202 846h1v1h-1zM215 846h1v1h-1zM227 846h1v1h-1zM240 846h1v1h-1zM253 846h1v1h-1zM266 846h1v1h-1zM278 846h1v1h-1zM291 846h1v1h-1zM304 846h1v1h-1zM316 846h1v1h-1zM329 846h1v1h-1zM342 846h1v1h-1zM355 846h1v1h-1zM367 846h1v1h-1zM380 846h1v1h-1zM393 846h1v1h-1zM405 846h1v1h-1zM418 846h1v1h-1zM431 846h1v1h-1zM444 846h1v1h-1zM456 846h1v1h-1zM469 846h1v1h-1zM482 846h1v1h-1zM494 846h1v1h-1zM507 846h1v1h-1zM520 846h1v1h-1zM533 846h1v1h-1zM545 846h1v1h-1zM558 846h1v1h-1zM571 846h1v1h-1zM583 846h1v1h-1zM596 846h1v1h-1zM609 846h1v1h-1zM622 846h1v1h-1zM634 846h1v1h-1zM647 846h1v1h-1zM660 846h1v1h-1zM672 846h1v1h-1zM685 846h1v1h-1zM698 846h1v1h-1zM711 846h1v1h-1zM723 846h1v1h-1zM736 846h1v1h-1zM749 846h1v1h-1zM761 846h1v1h-1zM774 846h1v1h-1zM787 846h1v1h-1zM799 846h1v1h-1zM812 846h1v1h-1zM825 846h1v1h-1zM838 846h1v1h-1zM850 846h1v1h-1zM863 846h1v1h-1zM876 846h1v1h-1zM888 846h1v1h-1zM901 846h1v1h-1zM914 846h1v1h-1zM927 846h1v1h-1zM939 846h1v1h-1zM952 846h1v1h-1zM965 846h1v1h-1zM977 846h1v1h-1zM990 846h1v1h-1zM1003 846h1v1h-1zM1016 846h1v1h-1zM1028 846h1v1h-1zM1041 846h1v1h-1zM1054 846h1v1h-1zM1066 846h1v1h-1zM1079 846h1v1h-1zM1092 846h1v1h-1zM1105 846h1v1h-1zM1117 846h1v1h-1zM1130 846h1v1h-1zM1143 846h1v1h-1zM1155 846h1v1h-1zM1168 846h1v1h-1zM1181 846h1v1h-1zM1194 846h1v1h-1zM1206 846h1v1h-1zM1219 846h1v1h-1zM1232 846h1v1h-1zM1244 846h1v1h-1zM1257 846h1v1h-1zM1270 846h1v1h-1zM1283 846h1v1h-1zM1295 846h1v1h-1zM1308 846h1v1h-1zM1321 846h1v1h-1zM1333 846h1v1h-1zM1346 846h1v1h-1zM1359 846h1v1h-1zM1371 846h1v1h-1zM1384 846h1v1h-1zM1397 846h1v1h-1zM1410 846h1v1h-1zM1422 846h1v1h-1zM1435 846h1v1h-1zM1448 846h1v1h-1zM1460 846h1v1h-1zM1473 846h1v1h-1zM1486 846h1v1h-1zM1499 846h1v1h-1zM1511 846h1v1h-1zM1524 846h1v1h-1zM1537 846h1v1h-1zM1549 846h1v1h-1zM1562 846h1v1h-1zM1575 846h1v1h-1zM1588 846h1v1h-1zM1600 846h1v1h-1zM1613 846h1v1h-1zM1626 846h1v1h-1zM1638 846h1v1h-1zM1651 846h1v1h-1zM1664 846h1v1h-1zM11 859h1v1h-1zM24 859h1v1h-1zM37 859h1v1h-1zM50 859h1v1h-1zM62 859h1v1h-1zM75 859h1v1h-1zM88 859h1v1h-1zM100 859h1v1h-1zM113 859h1v1h-1zM126 859h1v1h-1zM139 859h1v1h-1zM151 859h1v1h-1zM164 859h1v1h-1zM177 859h1v1h-1zM189 859h1v1h-1zM202 859h1v1h-1zM215 859h1v1h-1zM227 859h1v1h-1zM240 859h1v1h-1zM253 859h1v1h-1zM266 859h1v1h-1zM278 859h1v1h-1zM291 859h1v1h-1zM304 859h1v1h-1zM316 859h1v1h-1zM329 859h1v1h-1zM342 859h1v1h-1zM355 859h1v1h-1zM367 859h1v1h-1zM380 859h1v1h-1zM393 859h1v1h-1zM405 859h1v1h-1zM418 859h1v1h-1zM431 859h1v1h-1zM444 859h1v1h-1zM456 859h1v1h-1zM469 859h1v1h-1zM482 859h1v1h-1zM494 859h1v1h-1zM507 859h1v1h-1zM520 859h1v1h-1zM533 859h1v1h-1zM545 859h1v1h-1zM558 859h1v1h-1zM571 859h1v1h-1zM583 859h1v1h-1zM596 859h1v1h-1zM609 859h1v1h-1zM622 859h1v1h-1zM634 859h1v1h-1zM647 859h1v1h-1zM660 859h1v1h-1zM672 859h1v1h-1zM685 859h1v1h-1zM698 859h1v1h-1zM711 859h1v1h-1zM723 859h1v1h-1zM736 859h1v1h-1zM749 859h1v1h-1zM761 859h1v1h-1zM774 859h1v1h-1zM787 859h1v1h-1zM799 859h1v1h-1zM812 859h1v1h-1zM825 859h1v1h-1zM838 859h1v1h-1zM850 859h1v1h-1zM863 859h1v1h-1zM876 859h1v1h-1zM888 859h1v1h-1zM901 859h1v1h-1zM914 859h1v1h-1zM927 859h1v1h-1zM939 859h1v1h-1zM952 859h1v1h-1zM965 859h1v1h-1zM977 859h1v1h-1zM990 859h1v1h-1zM1003 859h1v1h-1zM1016 859h1v1h-1zM1028 859h1v1h-1zM1041 859h1v1h-1zM1054 859h1v1h-1zM1066 859h1v1h-1zM1079 859h1v1h-1zM1092 859h1v1h-1zM1105 859h1v1h-1zM1117 859h1v1h-1zM1130 859h1v1h-1zM1143 859h1v1h-1zM1155 859h1v1h-1zM1168 859h1v1h-1zM1181 859h1v1h-1zM1194 859h1v1h-1zM1206 859h1v1h-1zM1219 859h1v1h-1zM1232 859h1v1h-1zM1244 859h1v1h-1zM1257 859h1v1h-1zM1270 859h1v1h-1zM1283 859h1v1h-1zM1295 859h1v1h-1zM1308 859h1v1h-1zM1321 859h1v1h-1zM1333 859h1v1h-1zM1346 859h1v1h-1zM1359 859h1v1h-1zM1371 859h1v1h-1zM1384 859h1v1h-1zM1397 859h1v1h-1zM1410 859h1v1h-1zM1422 859h1v1h-1zM1435 859h1v1h-1zM1448 859h1v1h-1zM1460 859h1v1h-1zM1473 859h1v1h-1zM1486 859h1v1h-1zM1499 859h1v1h-1zM1511 859h1v1h-1zM1524 859h1v1h-1zM1537 859h1v1h-1zM1549 859h1v1h-1zM1562 859h1v1h-1zM1575 859h1v1h-1zM1588 859h1v1h-1zM1600 859h1v1h-1zM1613 859h1v1h-1zM1626 859h1v1h-1zM1638 859h1v1h-1zM1651 859h1v1h-1zM1664 859h1v1h-1zM11 872h1v1h-1zM24 872h1v1h-1zM37 872h1v1h-1zM50 872h1v1h-1zM62 872h1v1h-1zM75 872h1v1h-1zM88 872h1v1h-1zM100 872h1v1h-1zM113 872h1v1h-1zM126 872h1v1h-1zM139 872h1v1h-1zM151 872h1v1h-1zM164 872h1v1h-1zM177 872h1v1h-1zM189 872h1v1h-1zM202 872h1v1h-1zM215 872h1v1h-1zM227 872h1v1h-1zM240 872h1v1h-1zM253 872h1v1h-1zM266 872h1v1h-1zM278 872h1v1h-1zM291 872h1v1h-1zM304 872h1v1h-1zM316 872h1v1h-1zM329 872h1v1h-1zM342 872h1v1h-1zM355 872h1v1h-1zM367 872h1v1h-1zM380 872h1v1h-1zM393 872h1v1h-1zM405 872h1v1h-1zM418 872h1v1h-1zM431 872h1v1h-1zM444 872h1v1h-1zM456 872h1v1h-1zM469 872h1v1h-1zM482 872h1v1h-1zM494 872h1v1h-1zM507 872h1v1h-1zM520 872h1v1h-1zM533 872h1v1h-1zM545 872h1v1h-1zM558 872h1v1h-1zM571 872h1v1h-1zM583 872h1v1h-1zM596 872h1v1h-1zM609 872h1v1h-1zM622 872h1v1h-1zM634 872h1v1h-1zM647 872h1v1h-1zM660 872h1v1h-1zM672 872h1v1h-1zM685 872h1v1h-1zM698 872h1v1h-1zM711 872h1v1h-1zM723 872h1v1h-1zM736 872h1v1h-1zM749 872h1v1h-1zM761 872h1v1h-1zM774 872h1v1h-1zM787 872h1v1h-1zM799 872h1v1h-1zM812 872h1v1h-1zM825 872h1v1h-1zM838 872h1v1h-1zM850 872h1v1h-1zM863 872h1v1h-1zM876 872h1v1h-1zM888 872h1v1h-1zM901 872h1v1h-1zM914 872h1v1h-1zM927 872h1v1h-1zM939 872h1v1h-1zM952 872h1v1h-1zM965 872h1v1h-1zM977 872h1v1h-1zM990 872h1v1h-1zM1003 872h1v1h-1zM1016 872h1v1h-1zM1028 872h1v1h-1zM1041 872h1v1h-1zM1054 872h1v1h-1zM1066 872h1v1h-1zM1079 872h1v1h-1zM1092 872h1v1h-1zM1105 872h1v1h-1zM1117 872h1v1h-1zM1130 872h1v1h-1zM1143 872h1v1h-1zM1155 872h1v1h-1zM1168 872h1v1h-1zM1181 872h1v1h-1zM1194 872h1v1h-1zM1206 872h1v1h-1zM1219 872h1v1h-1zM1232 872h1v1h-1zM1244 872h1v1h-1zM1257 872h1v1h-1zM1270 872h1v1h-1zM1283 872h1v1h-1zM1295 872h1v1h-1zM1308 872h1v1h-1zM1321 872h1v1h-1zM1333 872h1v1h-1zM1346 872h1v1h-1zM1359 872h1v1h-1zM1371 872h1v1h-1zM1384 872h1v1h-1zM1397 872h1v1h-1zM1410 872h1v1h-1zM1422 872h1v1h-1zM1435 872h1v1h-1zM1448 872h1v1h-1zM1460 872h1v1h-1zM1473 872h1v1h-1zM1486 872h1v1h-1zM1499 872h1v1h-1zM1511 872h1v1h-1zM1524 872h1v1h-1zM1537 872h1v1h-1zM1549 872h1v1h-1zM1562 872h1v1h-1zM1575 872h1v1h-1zM1588 872h1v1h-1zM1600 872h1v1h-1zM1613 872h1v1h-1zM1626 872h1v1h-1zM1638 872h1v1h-1zM1651 872h1v1h-1zM1664 872h1v1h-1zM11 884h1v1h-1zM24 884h1v1h-1zM37 884h1v1h-1zM50 884h1v1h-1zM62 884h1v1h-1zM75 884h1v1h-1zM88 884h1v1h-1zM100 884h1v1h-1zM113 884h1v1h-1zM126 884h1v1h-1zM139 884h1v1h-1zM151 884h1v1h-1zM164 884h1v1h-1zM177 884h1v1h-1zM189 884h1v1h-1zM202 884h1v1h-1zM215 884h1v1h-1zM227 884h1v1h-1zM240 884h1v1h-1zM253 884h1v1h-1zM266 884h1v1h-1zM278 884h1v1h-1zM291 884h1v1h-1zM304 884h1v1h-1zM316 884h1v1h-1zM329 884h1v1h-1zM342 884h1v1h-1zM355 884h1v1h-1zM367 884h1v1h-1zM380 884h1v1h-1zM393 884h1v1h-1zM405 884h1v1h-1zM418 884h1v1h-1zM431 884h1v1h-1zM444 884h1v1h-1zM456 884h1v1h-1zM469 884h1v1h-1zM482 884h1v1h-1zM494 884h1v1h-1zM507 884h1v1h-1zM520 884h1v1h-1zM533 884h1v1h-1zM545 884h1v1h-1zM558 884h1v1h-1zM571 884h1v1h-1zM583 884h1v1h-1zM596 884h1v1h-1zM609 884h1v1h-1zM622 884h1v1h-1zM634 884h1v1h-1zM647 884h1v1h-1zM660 884h1v1h-1zM672 884h1v1h-1zM685 884h1v1h-1zM698 884h1v1h-1zM711 884h1v1h-1zM723 884h1v1h-1zM736 884h1v1h-1zM749 884h1v1h-1zM761 884h1v1h-1zM774 884h1v1h-1zM787 884h1v1h-1zM799 884h1v1h-1zM812 884h1v1h-1zM825 884h1v1h-1zM838 884h1v1h-1zM850 884h1v1h-1zM863 884h1v1h-1zM876 884h1v1h-1zM888 884h1v1h-1zM901 884h1v1h-1zM914 884h1v1h-1zM927 884h1v1h-1zM939 884h1v1h-1zM952 884h1v1h-1zM965 884h1v1h-1zM977 884h1v1h-1zM990 884h1v1h-1zM1003 884h1v1h-1zM1016 884h1v1h-1zM1028 884h1v1h-1zM1041 884h1v1h-1zM1054 884h1v1h-1zM1066 884h1v1h-1zM1079 884h1v1h-1zM1092 884h1v1h-1zM1105 884h1v1h-1zM1117 884h1v1h-1zM1130 884h1v1h-1zM1143 884h1v1h-1zM1155 884h1v1h-1zM1168 884h1v1h-1zM1181 884h1v1h-1zM1194 884h1v1h-1zM1206 884h1v1h-1zM1219 884h1v1h-1zM1232 884h1v1h-1zM1244 884h1v1h-1zM1257 884h1v1h-1zM1270 884h1v1h-1zM1283 884h1v1h-1zM1295 884h1v1h-1zM1308 884h1v1h-1zM1321 884h1v1h-1zM1333 884h1v1h-1zM1346 884h1v1h-1zM1359 884h1v1h-1zM1371 884h1v1h-1zM1384 884h1v1h-1zM1397 884h1v1h-1zM1410 884h1v1h-1zM1422 884h1v1h-1zM1435 884h1v1h-1zM1448 884h1v1h-1zM1460 884h1v1h-1zM1473 884h1v1h-1zM1486 884h1v1h-1zM1499 884h1v1h-1zM1511 884h1v1h-1zM1524 884h1v1h-1zM1537 884h1v1h-1zM1549 884h1v1h-1zM1562 884h1v1h-1zM1575 884h1v1h-1zM1588 884h1v1h-1zM1600 884h1v1h-1zM1613 884h1v1h-1zM1626 884h1v1h-1zM1638 884h1v1h-1zM1651 884h1v1h-1zM1664 884h1v1h-1zM11 897h1v1h-1zM24 897h1v1h-1zM37 897h1v1h-1zM50 897h1v1h-1zM62 897h1v1h-1zM75 897h1v1h-1zM88 897h1v1h-1zM100 897h1v1h-1zM113 897h1v1h-1zM126 897h1v1h-1zM139 897h1v1h-1zM151 897h1v1h-1zM164 897h1v1h-1zM177 897h1v1h-1zM189 897h1v1h-1zM202 897h1v1h-1zM215 897h1v1h-1zM227 897h1v1h-1zM240 897h1v1h-1zM253 897h1v1h-1zM266 897h1v1h-1zM278 897h1v1h-1zM291 897h1v1h-1zM304 897h1v1h-1zM316 897h1v1h-1zM329 897h1v1h-1zM342 897h1v1h-1zM355 897h1v1h-1zM367 897h1v1h-1zM380 897h1v1h-1zM393 897h1v1h-1zM405 897h1v1h-1zM418 897h1v1h-1zM431 897h1v1h-1zM444 897h1v1h-1zM456 897h1v1h-1zM469 897h1v1h-1zM482 897h1v1h-1zM494 897h1v1h-1zM507 897h1v1h-1zM520 897h1v1h-1zM533 897h1v1h-1zM545 897h1v1h-1zM558 897h1v1h-1zM571 897h1v1h-1zM583 897h1v1h-1zM596 897h1v1h-1zM609 897h1v1h-1zM622 897h1v1h-1zM634 897h1v1h-1zM647 897h1v1h-1zM660 897h1v1h-1zM672 897h1v1h-1zM685 897h1v1h-1zM698 897h1v1h-1zM711 897h1v1h-1zM723 897h1v1h-1zM736 897h1v1h-1zM749 897h1v1h-1zM761 897h1v1h-1zM774 897h1v1h-1zM787 897h1v1h-1zM799 897h1v1h-1zM812 897h1v1h-1zM825 897h1v1h-1zM838 897h1v1h-1zM850 897h1v1h-1zM863 897h1v1h-1zM876 897h1v1h-1zM888 897h1v1h-1zM901 897h1v1h-1zM914 897h1v1h-1zM927 897h1v1h-1zM939 897h1v1h-1zM952 897h1v1h-1zM965 897h1v1h-1zM977 897h1v1h-1zM990 897h1v1h-1zM1003 897h1v1h-1zM1016 897h1v1h-1zM1028 897h1v1h-1zM1041 897h1v1h-1zM1054 897h1v1h-1zM1066 897h1v1h-1zM1079 897h1v1h-1zM1092 897h1v1h-1zM1105 897h1v1h-1zM1117 897h1v1h-1zM1130 897h1v1h-1zM1143 897h1v1h-1zM1155 897h1v1h-1zM1168 897h1v1h-1zM1181 897h1v1h-1zM1194 897h1v1h-1zM1206 897h1v1h-1zM1219 897h1v1h-1zM1232 897h1v1h-1zM1244 897h1v1h-1zM1257 897h1v1h-1zM1270 897h1v1h-1zM1283 897h1v1h-1zM1295 897h1v1h-1zM1308 897h1v1h-1zM1321 897h1v1h-1zM1333 897h1v1h-1zM1346 897h1v1h-1zM1359 897h1v1h-1zM1371 897h1v1h-1zM1384 897h1v1h-1zM1397 897h1v1h-1zM1410 897h1v1h-1zM1422 897h1v1h-1zM1435 897h1v1h-1zM1448 897h1v1h-1zM1460 897h1v1h-1zM1473 897h1v1h-1zM1486 897h1v1h-1zM1499 897h1v1h-1zM1511 897h1v1h-1zM1524 897h1v1h-1zM1537 897h1v1h-1zM1549 897h1v1h-1zM1562 897h1v1h-1zM1575 897h1v1h-1zM1588 897h1v1h-1zM1600 897h1v1h-1zM1613 897h1v1h-1zM1626 897h1v1h-1zM1638 897h1v1h-1zM1651 897h1v1h-1zM1664 897h1v1h-1zM11 910h1v1h-1zM24 910h1v1h-1zM37 910h1v1h-1zM50 910h1v1h-1zM62 910h1v1h-1zM75 910h1v1h-1zM88 910h1v1h-1zM100 910h1v1h-1zM113 910h1v1h-1zM126 910h1v1h-1zM139 910h1v1h-1zM151 910h1v1h-1zM164 910h1v1h-1zM177 910h1v1h-1zM189 910h1v1h-1zM202 910h1v1h-1zM215 910h1v1h-1zM227 910h1v1h-1zM240 910h1v1h-1zM253 910h1v1h-1zM266 910h1v1h-1zM278 910h1v1h-1zM291 910h1v1h-1zM304 910h1v1h-1zM316 910h1v1h-1zM329 910h1v1h-1zM342 910h1v1h-1zM355 910h1v1h-1zM367 910h1v1h-1zM380 910h1v1h-1zM393 910h1v1h-1zM405 910h1v1h-1zM418 910h1v1h-1zM431 910h1v1h-1zM444 910h1v1h-1zM456 910h1v1h-1zM469 910h1v1h-1zM482 910h1v1h-1zM494 910h1v1h-1zM507 910h1v1h-1zM520 910h1v1h-1zM533 910h1v1h-1zM545 910h1v1h-1zM558 910h1v1h-1zM571 910h1v1h-1zM583 910h1v1h-1zM596 910h1v1h-1zM609 910h1v1h-1zM622 910h1v1h-1zM634 910h1v1h-1zM647 910h1v1h-1zM660 910h1v1h-1zM672 910h1v1h-1zM685 910h1v1h-1zM698 910h1v1h-1zM711 910h1v1h-1zM723 910h1v1h-1zM736 910h1v1h-1zM749 910h1v1h-1zM761 910h1v1h-1zM774 910h1v1h-1zM787 910h1v1h-1zM799 910h1v1h-1zM812 910h1v1h-1zM825 910h1v1h-1zM838 910h1v1h-1zM850 910h1v1h-1zM863 910h1v1h-1zM876 910h1v1h-1zM888 910h1v1h-1zM901 910h1v1h-1zM914 910h1v1h-1zM927 910h1v1h-1zM939 910h1v1h-1zM952 910h1v1h-1zM965 910h1v1h-1zM977 910h1v1h-1zM990 910h1v1h-1zM1003 910h1v1h-1zM1016 910h1v1h-1zM1028 910h1v1h-1zM1041 910h1v1h-1zM1054 910h1v1h-1zM1066 910h1v1h-1zM1079 910h1v1h-1zM1092 910h1v1h-1zM1105 910h1v1h-1zM1117 910h1v1h-1zM1130 910h1v1h-1zM1143 910h1v1h-1zM1155 910h1v1h-1zM1168 910h1v1h-1zM1181 910h1v1h-1zM1194 910h1v1h-1zM1206 910h1v1h-1zM1219 910h1v1h-1zM1232 910h1v1h-1zM1244 910h1v1h-1zM1257 910h1v1h-1zM1270 910h1v1h-1zM1283 910h1v1h-1zM1295 910h1v1h-1zM1308 910h1v1h-1zM1321 910h1v1h-1zM1333 910h1v1h-1zM1346 910h1v1h-1zM1359 910h1v1h-1zM1371 910h1v1h-1zM1384 910h1v1h-1zM1397 910h1v1h-1zM1410 910h1v1h-1zM1422 910h1v1h-1zM1435 910h1v1h-1zM1448 910h1v1h-1zM1460 910h1v1h-1zM1473 910h1v1h-1zM1486 910h1v1h-1zM1499 910h1v1h-1zM1511 910h1v1h-1zM1524 910h1v1h-1zM1537 910h1v1h-1zM1549 910h1v1h-1zM1562 910h1v1h-1zM1575 910h1v1h-1zM1588 910h1v1h-1zM1600 910h1v1h-1zM1613 910h1v1h-1zM1626 910h1v1h-1zM1638 910h1v1h-1zM1651 910h1v1h-1zM1664 910h1v1h-1zM11 922h1v1h-1zM24 922h1v1h-1zM37 922h1v1h-1zM50 922h1v1h-1zM62 922h1v1h-1zM75 922h1v1h-1zM88 922h1v1h-1zM100 922h1v1h-1zM113 922h1v1h-1zM126 922h1v1h-1zM139 922h1v1h-1zM151 922h1v1h-1zM164 922h1v1h-1zM177 922h1v1h-1zM189 922h1v1h-1zM202 922h1v1h-1zM215 922h1v1h-1zM227 922h1v1h-1zM240 922h1v1h-1zM253 922h1v1h-1zM266 922h1v1h-1zM278 922h1v1h-1zM291 922h1v1h-1zM304 922h1v1h-1zM316 922h1v1h-1zM329 922h1v1h-1zM342 922h1v1h-1zM355 922h1v1h-1zM367 922h1v1h-1zM380 922h1v1h-1zM393 922h1v1h-1zM405 922h1v1h-1zM418 922h1v1h-1zM431 922h1v1h-1zM444 922h1v1h-1zM456 922h1v1h-1zM469 922h1v1h-1zM482 922h1v1h-1zM494 922h1v1h-1zM507 922h1v1h-1zM520 922h1v1h-1zM533 922h1v1h-1zM545 922h1v1h-1zM558 922h1v1h-1zM571 922h1v1h-1zM583 922h1v1h-1zM596 922h1v1h-1zM609 922h1v1h-1zM622 922h1v1h-1zM634 922h1v1h-1zM647 922h1v1h-1zM660 922h1v1h-1zM672 922h1v1h-1zM685 922h1v1h-1zM698 922h1v1h-1zM711 922h1v1h-1zM723 922h1v1h-1zM736 922h1v1h-1zM749 922h1v1h-1zM761 922h1v1h-1zM774 922h1v1h-1zM787 922h1v1h-1zM799 922h1v1h-1zM812 922h1v1h-1zM825 922h1v1h-1zM838 922h1v1h-1zM850 922h1v1h-1zM863 922h1v1h-1zM876 922h1v1h-1zM888 922h1v1h-1zM901 922h1v1h-1zM914 922h1v1h-1zM927 922h1v1h-1zM939 922h1v1h-1zM952 922h1v1h-1zM965 922h1v1h-1zM977 922h1v1h-1zM990 922h1v1h-1zM1003 922h1v1h-1zM1016 922h1v1h-1zM1028 922h1v1h-1zM1041 922h1v1h-1zM1054 922h1v1h-1zM1066 922h1v1h-1zM1079 922h1v1h-1zM1092 922h1v1h-1zM1105 922h1v1h-1zM1117 922h1v1h-1zM1130 922h1v1h-1zM1143 922h1v1h-1zM1155 922h1v1h-1zM1168 922h1v1h-1zM1181 922h1v1h-1zM1194 922h1v1h-1zM1206 922h1v1h-1zM1219 922h1v1h-1zM1232 922h1v1h-1zM1244 922h1v1h-1zM1257 922h1v1h-1zM1270 922h1v1h-1zM1283 922h1v1h-1zM1295 922h1v1h-1zM1308 922h1v1h-1zM1321 922h1v1h-1zM1333 922h1v1h-1zM1346 922h1v1h-1zM1359 922h1v1h-1zM1371 922h1v1h-1zM1384 922h1v1h-1zM1397 922h1v1h-1zM1410 922h1v1h-1zM1422 922h1v1h-1zM1435 922h1v1h-1zM1448 922h1v1h-1zM1460 922h1v1h-1zM1473 922h1v1h-1zM1486 922h1v1h-1zM1499 922h1v1h-1zM1511 922h1v1h-1zM1524 922h1v1h-1zM1537 922h1v1h-1zM1549 922h1v1h-1zM1562 922h1v1h-1zM1575 922h1v1h-1zM1588 922h1v1h-1zM1600 922h1v1h-1zM1613 922h1v1h-1zM1626 922h1v1h-1zM1638 922h1v1h-1zM1651 922h1v1h-1zM1664 922h1v1h-1zM11 935h1v1h-1zM24 935h1v1h-1zM37 935h1v1h-1zM50 935h1v1h-1zM62 935h1v1h-1zM75 935h1v1h-1zM88 935h1v1h-1zM100 935h1v1h-1zM113 935h1v1h-1zM126 935h1v1h-1zM139 935h1v1h-1zM151 935h1v1h-1zM164 935h1v1h-1zM177 935h1v1h-1zM189 935h1v1h-1zM202 935h1v1h-1zM215 935h1v1h-1zM227 935h1v1h-1zM240 935h1v1h-1zM253 935h1v1h-1zM266 935h1v1h-1zM278 935h1v1h-1zM291 935h1v1h-1zM304 935h1v1h-1zM316 935h1v1h-1zM329 935h1v1h-1zM342 935h1v1h-1zM355 935h1v1h-1zM367 935h1v1h-1zM380 935h1v1h-1zM393 935h1v1h-1zM405 935h1v1h-1zM418 935h1v1h-1zM431 935h1v1h-1zM444 935h1v1h-1zM456 935h1v1h-1zM469 935h1v1h-1zM482 935h1v1h-1zM494 935h1v1h-1zM507 935h1v1h-1zM520 935h1v1h-1zM533 935h1v1h-1zM545 935h1v1h-1zM558 935h1v1h-1zM571 935h1v1h-1zM583 935h1v1h-1zM596 935h1v1h-1zM609 935h1v1h-1zM622 935h1v1h-1zM634 935h1v1h-1zM647 935h1v1h-1zM660 935h1v1h-1zM672 935h1v1h-1zM685 935h1v1h-1zM698 935h1v1h-1zM711 935h1v1h-1zM723 935h1v1h-1zM736 935h1v1h-1zM749 935h1v1h-1zM761 935h1v1h-1zM774 935h1v1h-1zM787 935h1v1h-1zM799 935h1v1h-1zM812 935h1v1h-1zM825 935h1v1h-1zM838 935h1v1h-1zM850 935h1v1h-1zM863 935h1v1h-1zM876 935h1v1h-1zM888 935h1v1h-1zM901 935h1v1h-1zM914 935h1v1h-1zM927 935h1v1h-1zM939 935h1v1h-1zM952 935h1v1h-1zM965 935h1v1h-1zM977 935h1v1h-1zM990 935h1v1h-1zM1003 935h1v1h-1zM1016 935h1v1h-1zM1028 935h1v1h-1zM1041 935h1v1h-1zM1054 935h1v1h-1zM1066 935h1v1h-1zM1079 935h1v1h-1zM1092 935h1v1h-1zM1105 935h1v1h-1zM1117 935h1v1h-1zM1130 935h1v1h-1zM1143 935h1v1h-1zM1155 935h1v1h-1zM1168 935h1v1h-1zM1181 935h1v1h-1zM1194 935h1v1h-1zM1206 935h1v1h-1zM1219 935h1v1h-1zM1232 935h1v1h-1zM1244 935h1v1h-1zM1257 935h1v1h-1zM1270 935h1v1h-1zM1283 935h1v1h-1zM1295 935h1v1h-1zM1308 935h1v1h-1zM1321 935h1v1h-1zM1333 935h1v1h-1zM1346 935h1v1h-1zM1359 935h1v1h-1zM1371 935h1v1h-1zM1384 935h1v1h-1zM1397 935h1v1h-1zM1410 935h1v1h-1zM1422 935h1v1h-1zM1435 935h1v1h-1zM1448 935h1v1h-1zM1460 935h1v1h-1zM1473 935h1v1h-1zM1486 935h1v1h-1zM1499 935h1v1h-1zM1511 935h1v1h-1zM1524 935h1v1h-1zM1537 935h1v1h-1zM1549 935h1v1h-1zM1562 935h1v1h-1zM1575 935h1v1h-1zM1588 935h1v1h-1zM1600 935h1v1h-1zM1613 935h1v1h-1zM1626 935h1v1h-1zM1638 935h1v1h-1zM1651 935h1v1h-1zM1664 935h1v1h-1z" fill="#000"/><path d="M240.5 683.5 L240.5 705.5 L211.5 705.5 L200.5 694.5 L211.5 683.5Z" fill="none" stroke="#0000ff" stroke-width="1"/><text x="227.0" y="702" font-size="20" font-weight="bold" fill="#000" stroke="#000" stroke-width="0.35" text-anchor="middle">V+</text><rect x="240" y="694" width="141" height="1" fill="#0000ff"/><rect x="380" y="694" width="7" height="1" fill="#000080"/><rect x="437" y="694" width="8" height="1" fill="#000080"/><path d="M386.5 694.5 L393.5 681.5 L405.5 706.5 L418.5 681.5 L431.5 706.5 L437.5 694.5" fill="none" stroke="#000080" stroke-width="1"/><text x="411.5" y="678" font-size="20" font-weight="bold" fill="#000" stroke="#000" stroke-width="0.35" text-anchor="middle">R1</text><text x="411.5" y="726" font-size="20" font-weight="bold" fill="#000" stroke="#000" stroke-width="0.35" text-anchor="middle">100k</text><rect x="444" y="694" width="293" height="1" fill="#0000ff"/><rect x="695" y="691" width="7" height="7" fill="#0000ff"/><rect x="698" y="605" width="1" height="90" fill="#0000ff"/><rect x="698" y="605" width="39" height="1" fill="#0000ff"/><rect x="736" y="605" width="23" height="1" fill="#000080"/><rect x="758" y="592" width="1" height="26" fill="#000080"/><path d="M769.5 592.5 Q761 605 769.5 617.5" fill="none" stroke="#000080" shape-rendering="geometricPrecision"/><rect x="765" y="605" width="23" height="1" fill="#000080"/><rect x="746" y="611" width="7" height="1" fill="#000080"/><rect x="749" y="608" width="1" height="7" fill="#000080"/><text x="748" y="589" font-size="20" font-weight="bold" fill="#000" stroke="#000" stroke-width="0.35" text-anchor="start" textLength="88" lengthAdjust="spacing">C1 IC=0 V</text><text x="761" y="637" font-size="20" font-weight="bold" fill="#000" stroke="#000" stroke-width="0.35" text-anchor="middle">220µ</text><rect x="787" y="605" width="77" height="1" fill="#0000ff"/><rect x="863" y="605" width="1" height="102" fill="#0000ff"/><rect x="736" y="681" width="1" height="52" fill="#000080"/><path d="M736.5 681.5 L787.5 706.5 L736.5 732.5" fill="none" stroke="#000080" stroke-width="1"/><rect x="761" y="681" width="1" height="14" fill="#000080"/><rect x="761" y="719" width="1" height="14" fill="#000080"/><rect x="739" y="694" width="8" height="1" fill="#000080"/><rect x="739" y="719" width="7" height="1" fill="#000080"/><rect x="742" y="716" width="1" height="7" fill="#000080"/><rect x="765" y="691" width="7" height="1" fill="#000080"/><rect x="768" y="688" width="1" height="7" fill="#000080"/><rect x="765" y="722" width="8" height="1" fill="#000080"/><text x="773" y="689" font-size="20" font-weight="bold" fill="#000" stroke="#000" stroke-width="0.35" text-anchor="start">U1</text><text x="773" y="739" font-size="20" font-weight="bold" fill="#000" stroke="#000" stroke-width="0.35" text-anchor="start" textLength="70" lengthAdjust="spacing">LT1716</text><path d="M761.5 680.5 L772.5 669.5 L772.5 640.5 L750.5 640.5 L750.5 669.5Z" fill="none" stroke="#0000ff" stroke-width="1"/><text x="767" y="656.5" font-size="20" font-weight="bold" fill="#000" stroke="#000" stroke-width="0.35" text-anchor="middle" transform="rotate(-90 767 656.5)">V+</text><path d="M761.5 732.5 L772.5 742.5 L772.5 766.5 L750.5 766.5 L750.5 742.5Z" fill="none" stroke="#0000ff" stroke-width="1"/><text x="767" y="753.0" font-size="20" font-weight="bold" fill="#000" stroke="#000" stroke-width="0.35" text-anchor="middle" transform="rotate(-90 767 753.0)">V-</text><rect x="685" y="719" width="52" height="1" fill="#0000ff"/><rect x="685" y="719" width="1" height="39" fill="#0000ff"/><path d="M671.5 757.5 L699.5 757.5 L685.5 772.5Z" fill="none" stroke="#0000ff" stroke-width="1"/><rect x="787" y="706" width="102" height="1" fill="#0000ff"/><rect x="860" y="703" width="7" height="7" fill="#0000ff"/><rect x="888" y="706" width="8" height="1" fill="#000080"/><rect x="946" y="706" width="7" height="1" fill="#000080"/><path d="M895.5 706.5 L901.5 694.5 L914.5 719.5 L927.5 694.5 L939.5 719.5 L946.5 706.5" fill="none" stroke="#000080" stroke-width="1"/><text x="920.5" y="691" font-size="20" font-weight="bold" fill="#000" stroke="#000" stroke-width="0.35" text-anchor="middle">R6</text><text x="920.5" y="738" font-size="20" font-weight="bold" fill="#000" stroke="#000" stroke-width="0.35" text-anchor="middle">200k</text><rect x="952" y="706" width="39" height="1" fill="#0000ff"/><rect x="962" y="703" width="7" height="7" fill="#0000ff"/><rect x="965" y="592" width="1" height="115" fill="#0000ff"/><rect x="965" y="592" width="13" height="1" fill="#0000ff"/><rect x="977" y="592" width="8" height="1" fill="#000080"/><rect x="1035" y="592" width="7" height="1" fill="#000080"/><path d="M984.5 592.5 L990.5 579.5 L1003.5 605.5 L1016.5 579.5 L1028.5 605.5 L1035.5 592.5" fill="none" stroke="#000080" stroke-width="1"/><text x="1009.5" y="576" font-size="20" font-weight="bold" fill="#000" stroke="#000" stroke-width="0.35" text-anchor="middle">R7</text><text x="1009.5" y="624" font-size="20" font-weight="bold" fill="#000" stroke="#000" stroke-width="0.35" text-anchor="middle">200k</text><rect x="1041" y="592" width="115" height="1" fill="#0000ff"/><rect x="1155" y="592" width="1" height="128" fill="#0000ff"/><rect x="990" y="694" width="1" height="52" fill="#000080"/><path d="M990.5 694.5 L1041.5 719.5 L990.5 745.5" fill="none" stroke="#000080" stroke-width="1"/><rect x="1016" y="694" width="1" height="13" fill="#000080"/><rect x="1016" y="732" width="1" height="14" fill="#000080"/><rect x="993" y="706" width="8" height="1" fill="#000080"/><rect x="993" y="732" width="7" height="1" fill="#000080"/><rect x="996" y="729" width="1" height="7" fill="#000080"/><rect x="1020" y="703" width="7" height="1" fill="#000080"/><rect x="1023" y="700" width="1" height="7" fill="#000080"/><rect x="1020" y="735" width="8" height="1" fill="#000080"/><text x="1028" y="702" font-size="20" font-weight="bold" fill="#000" stroke="#000" stroke-width="0.35" text-anchor="start">U3</text><text x="1028" y="752" font-size="20" font-weight="bold" fill="#000" stroke="#000" stroke-width="0.35" text-anchor="start" textLength="70" lengthAdjust="spacing">LT1716</text><path d="M1016.5 693.5 L1027.5 682.5 L1027.5 653.5 L1005.5 653.5 L1005.5 682.5Z" fill="none" stroke="#0000ff" stroke-width="1"/><text x="1022" y="669.5" font-size="20" font-weight="bold" fill="#000" stroke="#000" stroke-width="0.35" text-anchor="middle" transform="rotate(-90 1022 669.5)">V+</text><path d="M1016.5 745.5 L1027.5 755.5 L1027.5 779.5 L1005.5 779.5 L1005.5 755.5Z" fill="none" stroke="#0000ff" stroke-width="1"/><text x="1022" y="766.0" font-size="20" font-weight="bold" fill="#000" stroke="#000" stroke-width="0.35" text-anchor="middle" transform="rotate(-90 1022 766.0)">V-</text><rect x="952" y="732" width="39" height="1" fill="#0000ff"/><rect x="952" y="732" width="1" height="39" fill="#0000ff"/><path d="M938.5 770.5 L966.5 770.5 L952.5 785.5Z" fill="none" stroke="#0000ff" stroke-width="1"/><rect x="1041" y="719" width="166" height="1" fill="#0000ff"/><rect x="1152" y="716" width="7" height="7" fill="#0000ff"/><rect x="1206" y="719" width="8" height="1" fill="#000080"/><rect x="1263" y="719" width="8" height="1" fill="#000080"/><path d="M1213.5 719.5 L1219.5 706.5 L1232.5 732.5 L1244.5 706.5 L1257.5 732.5 L1263.5 719.5" fill="none" stroke="#000080" stroke-width="1"/><text x="1238.0" y="703" font-size="20" font-weight="bold" fill="#000" stroke="#000" stroke-width="0.35" text-anchor="middle">R4</text><text x="1238.0" y="751" font-size="20" font-weight="bold" fill="#000" stroke="#000" stroke-width="0.35" text-anchor="middle">200k</text><rect x="1270" y="719" width="26" height="1" fill="#0000ff"/><rect x="1280" y="716" width="7" height="7" fill="#0000ff"/><path d="M1155.5 734.5 L1155.5 756.5 L1125.5 756.5 L1114.5 745.5 L1125.5 734.5Z" fill="none" stroke="#0000ff" stroke-width="1"/><text x="1141.5" y="753" font-size="20" font-weight="bold" fill="#000" stroke="#000" stroke-width="0.35" text-anchor="middle">V+</text><rect x="1155" y="745" width="8" height="1" fill="#000080"/><rect x="1213" y="745" width="7" height="1" fill="#000080"/><path d="M1162.5 745.5 L1168.5 732.5 L1181.5 757.5 L1194.5 732.5 L1206.5 757.5 L1213.5 745.5" fill="none" stroke="#000080" stroke-width="1"/><text x="1187.5" y="729" font-size="20" font-weight="bold" fill="#000" stroke="#000" stroke-width="0.35" text-anchor="middle">R2</text><text x="1187.5" y="777" font-size="20" font-weight="bold" fill="#000" stroke="#000" stroke-width="0.35" text-anchor="middle">200k</text><rect x="1219" y="745" width="77" height="1" fill="#0000ff"/><rect x="1254" y="742" width="7" height="7" fill="#0000ff"/><rect x="1257" y="745" width="1" height="26" fill="#0000ff"/><rect x="1257" y="770" width="1" height="7" fill="#000080"/><rect x="1257" y="827" width="1" height="7" fill="#000080"/><path d="M1257.5 776.5 L1270.5 783.5 L1244.5 795.5 L1270.5 808.5 L1244.5 821.5 L1257.5 827.5" fill="none" stroke="#000080" stroke-width="1"/><rect x="1257" y="833" width="1" height="14" fill="#0000ff"/><path d="M1243.5 846.5 L1271.5 846.5 L1257.5 861.5Z" fill="none" stroke="#0000ff" stroke-width="1"/><text x="1240" y="795" font-size="20" font-weight="bold" fill="#000" stroke="#000" stroke-width="0.35" text-anchor="end">R3</text><text x="1240" y="822" font-size="20" font-weight="bold" fill="#000" stroke="#000" stroke-width="0.35" text-anchor="end">200k</text><rect x="1295" y="706" width="1" height="52" fill="#000080"/><path d="M1295.5 706.5 L1346.5 732.5 L1295.5 757.5" fill="none" stroke="#000080" stroke-width="1"/><rect x="1321" y="706" width="1" height="14" fill="#000080"/><rect x="1321" y="745" width="1" height="13" fill="#000080"/><rect x="1298" y="719" width="8" height="1" fill="#000080"/><rect x="1298" y="745" width="7" height="1" fill="#000080"/><rect x="1301" y="742" width="1" height="7" fill="#000080"/><rect x="1325" y="716" width="7" height="1" fill="#000080"/><rect x="1328" y="713" width="1" height="7" fill="#000080"/><rect x="1325" y="748" width="8" height="1" fill="#000080"/><text x="1333" y="714" font-size="20" font-weight="bold" fill="#000" stroke="#000" stroke-width="0.35" text-anchor="start">U2</text><text x="1333" y="764" font-size="20" font-weight="bold" fill="#000" stroke="#000" stroke-width="0.35" text-anchor="start" textLength="70" lengthAdjust="spacing">LT1716</text><path d="M1321.5 705.5 L1332.5 694.5 L1332.5 665.5 L1310.5 665.5 L1310.5 694.5Z" fill="none" stroke="#0000ff" stroke-width="1"/><text x="1327" y="681.5" font-size="20" font-weight="bold" fill="#000" stroke="#000" stroke-width="0.35" text-anchor="middle" transform="rotate(-90 1327 681.5)">V+</text><path d="M1321.5 757.5 L1332.5 767.5 L1332.5 791.5 L1310.5 791.5 L1310.5 767.5Z" fill="none" stroke="#0000ff" stroke-width="1"/><text x="1327" y="778.0" font-size="20" font-weight="bold" fill="#000" stroke="#000" stroke-width="0.35" text-anchor="middle" transform="rotate(-90 1327 778.0)">V-</text><rect x="1283" y="630" width="1" height="90" fill="#0000ff"/><rect x="1283" y="630" width="13" height="1" fill="#0000ff"/><rect x="1295" y="630" width="8" height="1" fill="#000080"/><rect x="1352" y="630" width="8" height="1" fill="#000080"/><path d="M1302.5 630.5 L1308.5 617.5 L1321.5 643.5 L1333.5 617.5 L1346.5 643.5 L1352.5 630.5" fill="none" stroke="#000080" stroke-width="1"/><text x="1327.0" y="614" font-size="20" font-weight="bold" fill="#000" stroke="#000" stroke-width="0.35" text-anchor="middle">R5</text><text x="1327.0" y="662" font-size="20" font-weight="bold" fill="#000" stroke="#000" stroke-width="0.35" text-anchor="middle">200k</text><rect x="1359" y="630" width="64" height="1" fill="#0000ff"/><rect x="1422" y="630" width="1" height="103" fill="#0000ff"/><rect x="1346" y="732" width="154" height="1" fill="#0000ff"/><rect x="1419" y="729" width="7" height="7" fill="#0000ff"/><rect x="367" y="833" width="1" height="7" fill="#000080"/><rect x="367" y="891" width="1" height="7" fill="#000080"/><circle cx="367.5" cy="865.5" r="25.2" fill="none" stroke="#000080"/><rect x="363" y="846" width="9" height="1" fill="#000080"/><rect x="367" y="843" width="1" height="7" fill="#000080"/><rect x="363" y="884" width="9" height="1" fill="#000080"/><path d="M348 866.5 A9.5 9.5 0 0 1 367.5 866.0 A9.5 9.5 0 0 0 386.5 865.5" fill="none" stroke="#000080"/><rect x="456" y="833" width="1" height="7" fill="#000080"/><rect x="456" y="891" width="1" height="7" fill="#000080"/><circle cx="456.5" cy="865.5" r="25.2" fill="none" stroke="#000080"/><rect x="452" y="846" width="9" height="1" fill="#000080"/><rect x="456" y="843" width="1" height="7" fill="#000080"/><rect x="452" y="884" width="9" height="1" fill="#000080"/><path d="M437 866.5 A9.5 9.5 0 0 1 456.5 866.0 A9.5 9.5 0 0 0 475.5 865.5" fill="none" stroke="#000080"/><path d="M356.5 833.5 L378.5 833.5 L378.5 803.5 L367.5 793.5 L356.5 803.5Z" fill="none" stroke="#0000ff" stroke-width="1"/><text x="372" y="818.0" font-size="20" font-weight="bold" fill="#000" stroke="#000" stroke-width="0.35" text-anchor="middle" transform="rotate(-90 372 818.0)">V+</text><path d="M445.5 833.5 L467.5 833.5 L467.5 808.5 L456.5 798.5 L445.5 808.5Z" fill="none" stroke="#0000ff" stroke-width="1"/><text x="461" y="820.5" font-size="20" font-weight="bold" fill="#000" stroke="#000" stroke-width="0.35" text-anchor="middle" transform="rotate(-90 461 820.5)">V-</text><rect x="367" y="897" width="90" height="1" fill="#0000ff"/><rect x="415" y="894" width="7" height="7" fill="#0000ff"/><rect x="418" y="897" width="1" height="14" fill="#0000ff"/><path d="M404.5 910.5 L432.5 910.5 L418.5 925.5Z" fill="none" stroke="#0000ff" stroke-width="1"/><text x="387" y="841" font-size="20" font-weight="bold" fill="#000" stroke="#000" stroke-width="0.35" text-anchor="start">V+</text><text x="475" y="841" font-size="20" font-weight="bold" fill="#000" stroke="#000" stroke-width="0.35" text-anchor="start">V-</text><text x="318" y="866" font-size="20" font-weight="bold" fill="#000" stroke="#000" stroke-width="0.35" text-anchor="end">15</text><text x="528" y="868" font-size="20" font-weight="bold" fill="#000" stroke="#000" stroke-width="0.35" text-anchor="end" textLength="27" lengthAdjust="spacing">-15</text><text x="391" y="936" font-size="20" font-weight="bold" fill="#000" stroke="#000" stroke-width="0.35" text-anchor="start" textLength="79" lengthAdjust="spacing">.tran 400</text></g><rect x="0" y="978" width="1680" height="1" fill="#ffff00"/><rect x="0" y="979" width="1680" height="19" fill="#858300"/><rect x="0" y="998" width="1680" height="1" fill="#ffff00"/><rect x="0" y="999" width="1680" height="1" fill="#000000"/><rect x="0" y="1000" width="1680" height="1" fill="#000000"/><text x="2" y="993" font-size="11" fill="#000" font-weight="normal" text-anchor="start">Ready</text><rect x="1629" y="981" width="51" height="1" fill="#504c00"/><rect x="1629" y="981" width="1" height="16" fill="#504c00"/><rect x="1629" y="996" width="51" height="1" fill="#ffff00"/><rect x="1679" y="981" width="1" height="16" fill="#ffff00"/></svg></body></html>
